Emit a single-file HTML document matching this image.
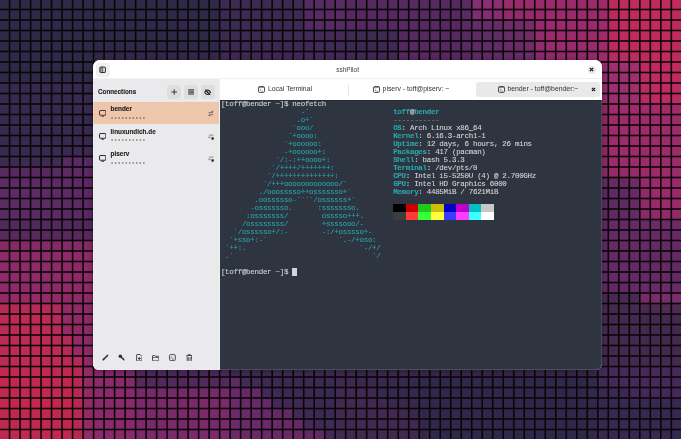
<!DOCTYPE html><html><head><meta charset="utf-8"><style>
*{margin:0;padding:0;box-sizing:border-box}
html,body{width:681px;height:439px;overflow:hidden;background:#0c0810}
.win{will-change:transform}
body{position:relative;font-family:"Liberation Sans",sans-serif}
.bg{position:absolute;left:0;top:0}
.win{position:absolute;left:93.2px;top:60px;width:509.2px;height:309.6px;border-radius:7px 7px 6px 6px;overflow:hidden;background:#fff;box-shadow:0 1px 6px rgba(0,0,0,.35)}
.win>*{position:absolute}
.hdr{left:0;top:0;width:100%;height:19px;background:#fff;border-bottom:1px solid #f1f1f1}
.edge{left:0;top:0;right:0;bottom:0;border-radius:7px 7px 6px 6px;border:1px solid rgba(255,255,255,.13);pointer-events:none}
.tbtn{left:3px;top:3.2px;width:13.8px;height:13.8px;border-radius:3.5px;background:#efefef}
.title{left:0;width:100%;top:4px;text-align:center;font-size:6.5px;line-height:12px;color:#3d3d3d}
.close{left:494.8px;top:5.6px;width:8.6px;height:8.6px;border-radius:50%;background:#e9e9e9}
.side{left:0;top:18.8px;width:127.4px;bottom:0;background:#eaeaec;border-right:1px solid #f1f1f3}
.conn{left:5px;top:28.2px;font-size:6.3px;font-weight:bold;color:#222;-webkit-text-stroke:0.12px #222;line-height:8px}
.sbtn{top:25.2px;width:13.4px;height:13.4px;border-radius:3.5px;background:#dedede}
.row{left:0;width:126.4px;height:22.2px}
.row.sel{background:#eec6ab}
.rt{left:17.6px;font-size:6.4px;font-weight:bold;color:#222;-webkit-text-stroke:0.12px #222;line-height:8px}
.rd{left:18px;font-size:5px;color:#666;letter-spacing:-0.2px;line-height:6px}
.tabs{left:127.3px;top:19px;right:0;height:20.2px;background:#fff}
.tab{top:22.3px;height:14.4px}
.tab.act{background:#e9e9e9;border-radius:3px}
.sep{top:23.8px;width:1px;height:11.8px;background:#e6e6e6}
.tabi{top:26.3px;width:7px;height:7px}
.tabi svg{display:block}
.tabt{top:25.3px;font-size:6.85px;color:#333;line-height:8px;white-space:nowrap}
.term{left:127.3px;top:39.5px;right:0;bottom:0;background:#2e3440;border-top:1px solid #272b34}
.term>*{position:absolute}
pre{-webkit-text-stroke:0.1px currentColor;left:0.6px;top:-0.3px;font-family:"Liberation Mono",monospace;font-size:7.5px;letter-spacing:-0.3px;line-height:8px;color:#c8cbc8;white-space:pre}
.cy{color:#25a4ac}
b.cy{color:#2aa6aa}
.fg{color:#d2d4d2}
.cur{background:#d4d4d4;left:71.4px;top:167.3px;width:5.1px;height:8.1px}
.dim{color:#8a8c90}
.cb{width:12.6px;height:8px}
.ic{position:absolute}
</style></head><body><svg class="bg" width="681" height="439" viewBox="0 0 681 439"><rect width="681" height="439" fill="#0a0608"/><rect x="-0.14" y="-0.20" width="8.90" height="8.90" fill="#2d2947"/><rect x="10.36" y="-0.20" width="8.90" height="8.90" fill="#2d2947"/><rect x="20.86" y="-0.20" width="8.90" height="8.90" fill="#2d2947"/><rect x="31.37" y="-0.20" width="8.90" height="8.90" fill="#2d2947"/><rect x="41.87" y="-0.20" width="8.90" height="8.90" fill="#2d2947"/><rect x="52.38" y="-0.20" width="8.90" height="8.90" fill="#2d2947"/><rect x="62.88" y="-0.20" width="8.90" height="8.90" fill="#2d2947"/><rect x="73.38" y="-0.20" width="8.90" height="8.90" fill="#2d2947"/><rect x="83.89" y="-0.20" width="8.90" height="8.90" fill="#2d2947"/><rect x="94.39" y="-0.20" width="8.90" height="8.90" fill="#2d2947"/><rect x="104.90" y="-0.20" width="8.90" height="8.90" fill="#2d2947"/><rect x="115.40" y="-0.20" width="8.90" height="8.90" fill="#2d2947"/><rect x="125.90" y="-0.20" width="8.90" height="8.90" fill="#2d2947"/><rect x="136.41" y="-0.20" width="8.90" height="8.90" fill="#2d2947"/><rect x="146.91" y="-0.20" width="8.90" height="8.90" fill="#2d2947"/><rect x="157.42" y="-0.20" width="8.90" height="8.90" fill="#2d2947"/><rect x="167.92" y="-0.20" width="8.90" height="8.90" fill="#2d2947"/><rect x="178.42" y="-0.20" width="8.90" height="8.90" fill="#2d2947"/><rect x="188.93" y="-0.20" width="8.90" height="8.90" fill="#2d2947"/><rect x="199.43" y="-0.20" width="8.90" height="8.90" fill="#2d2947"/><rect x="209.94" y="-0.20" width="8.90" height="8.90" fill="#2f2948"/><rect x="220.44" y="-0.20" width="8.90" height="8.90" fill="#392a51"/><rect x="230.94" y="-0.20" width="8.90" height="8.90" fill="#3b2a52"/><rect x="241.45" y="-0.20" width="8.90" height="8.90" fill="#3b2a52"/><rect x="251.95" y="-0.20" width="8.90" height="8.90" fill="#3b2a52"/><rect x="262.46" y="-0.20" width="8.90" height="8.90" fill="#3b2a52"/><rect x="272.96" y="-0.20" width="8.90" height="8.90" fill="#3b2a52"/><rect x="283.46" y="-0.20" width="8.90" height="8.90" fill="#3b2a52"/><rect x="293.97" y="-0.20" width="8.90" height="8.90" fill="#3e2a54"/><rect x="304.47" y="-0.20" width="8.90" height="8.90" fill="#552b62"/><rect x="314.98" y="-0.20" width="8.90" height="8.90" fill="#582b64"/><rect x="325.48" y="-0.20" width="8.90" height="8.90" fill="#582b64"/><rect x="335.98" y="-0.20" width="8.90" height="8.90" fill="#582b64"/><rect x="346.49" y="-0.20" width="8.90" height="8.90" fill="#562a60"/><rect x="356.99" y="-0.20" width="8.90" height="8.90" fill="#562a60"/><rect x="367.50" y="-0.20" width="8.90" height="8.90" fill="#562a60"/><rect x="378.00" y="-0.20" width="8.90" height="8.90" fill="#562a60"/><rect x="388.50" y="-0.20" width="8.90" height="8.90" fill="#562a60"/><rect x="399.01" y="-0.20" width="8.90" height="8.90" fill="#562a60"/><rect x="409.51" y="-0.20" width="8.90" height="8.90" fill="#562a60"/><rect x="420.02" y="-0.20" width="8.90" height="8.90" fill="#562a60"/><rect x="430.52" y="-0.20" width="8.90" height="8.90" fill="#562a60"/><rect x="441.02" y="-0.20" width="8.90" height="8.90" fill="#562a60"/><rect x="451.53" y="-0.20" width="8.90" height="8.90" fill="#562a60"/><rect x="462.03" y="-0.20" width="8.90" height="8.90" fill="#5c2a62"/><rect x="472.54" y="-0.20" width="8.90" height="8.90" fill="#842e73"/><rect x="483.04" y="-0.20" width="8.90" height="8.90" fill="#8a2e75"/><rect x="493.54" y="-0.20" width="8.90" height="8.90" fill="#8c2e74"/><rect x="504.05" y="-0.20" width="8.90" height="8.90" fill="#982a6d"/><rect x="514.55" y="-0.20" width="8.90" height="8.90" fill="#9a2a6c"/><rect x="525.06" y="-0.20" width="8.90" height="8.90" fill="#9a2a6c"/><rect x="535.56" y="-0.20" width="8.90" height="8.90" fill="#9a2a6c"/><rect x="546.06" y="-0.20" width="8.90" height="8.90" fill="#9a2a6c"/><rect x="556.57" y="-0.20" width="8.90" height="8.90" fill="#9a2a6c"/><rect x="567.07" y="-0.20" width="8.90" height="8.90" fill="#9a2a6c"/><rect x="577.58" y="-0.20" width="8.90" height="8.90" fill="#9a2a6c"/><rect x="588.08" y="-0.20" width="8.90" height="8.90" fill="#9a2a6c"/><rect x="598.58" y="-0.20" width="8.90" height="8.90" fill="#9e2a6a"/><rect x="609.09" y="-0.20" width="8.90" height="8.90" fill="#bc2a5e"/><rect x="619.59" y="-0.20" width="8.90" height="8.90" fill="#c02a5c"/><rect x="630.10" y="-0.20" width="8.90" height="8.90" fill="#c02a5c"/><rect x="640.60" y="-0.20" width="8.90" height="8.90" fill="#c02a5c"/><rect x="651.10" y="-0.20" width="8.90" height="8.90" fill="#c02a5c"/><rect x="661.61" y="-0.20" width="8.90" height="8.90" fill="#c02a5c"/><rect x="672.11" y="-0.20" width="8.90" height="8.90" fill="#c02a5c"/><rect x="-0.14" y="10.30" width="8.90" height="8.90" fill="#2d2947"/><rect x="10.36" y="10.30" width="8.90" height="8.90" fill="#2d2947"/><rect x="20.86" y="10.30" width="8.90" height="8.90" fill="#2d2947"/><rect x="31.37" y="10.30" width="8.90" height="8.90" fill="#2d2947"/><rect x="41.87" y="10.30" width="8.90" height="8.90" fill="#2d2947"/><rect x="52.38" y="10.30" width="8.90" height="8.90" fill="#2d2947"/><rect x="62.88" y="10.30" width="8.90" height="8.90" fill="#2d2947"/><rect x="73.38" y="10.30" width="8.90" height="8.90" fill="#2d2947"/><rect x="83.89" y="10.30" width="8.90" height="8.90" fill="#2d2947"/><rect x="94.39" y="10.30" width="8.90" height="8.90" fill="#2d2947"/><rect x="104.90" y="10.30" width="8.90" height="8.90" fill="#2d2947"/><rect x="115.40" y="10.30" width="8.90" height="8.90" fill="#2d2947"/><rect x="125.90" y="10.30" width="8.90" height="8.90" fill="#2d2947"/><rect x="136.41" y="10.30" width="8.90" height="8.90" fill="#2d2947"/><rect x="146.91" y="10.30" width="8.90" height="8.90" fill="#2d2947"/><rect x="157.42" y="10.30" width="8.90" height="8.90" fill="#2d2947"/><rect x="167.92" y="10.30" width="8.90" height="8.90" fill="#2d2947"/><rect x="178.42" y="10.30" width="8.90" height="8.90" fill="#2d2947"/><rect x="188.93" y="10.30" width="8.90" height="8.90" fill="#2d2947"/><rect x="199.43" y="10.30" width="8.90" height="8.90" fill="#2d2947"/><rect x="209.94" y="10.30" width="8.90" height="8.90" fill="#2f2949"/><rect x="220.44" y="10.30" width="8.90" height="8.90" fill="#392a50"/><rect x="230.94" y="10.30" width="8.90" height="8.90" fill="#3b2a52"/><rect x="241.45" y="10.30" width="8.90" height="8.90" fill="#3b2a52"/><rect x="251.95" y="10.30" width="8.90" height="8.90" fill="#3b2a52"/><rect x="262.46" y="10.30" width="8.90" height="8.90" fill="#3b2a52"/><rect x="272.96" y="10.30" width="8.90" height="8.90" fill="#3b2a52"/><rect x="283.46" y="10.30" width="8.90" height="8.90" fill="#3b2a52"/><rect x="293.97" y="10.30" width="8.90" height="8.90" fill="#3f2a55"/><rect x="304.47" y="10.30" width="8.90" height="8.90" fill="#542b61"/><rect x="314.98" y="10.30" width="8.90" height="8.90" fill="#582b64"/><rect x="325.48" y="10.30" width="8.90" height="8.90" fill="#582b64"/><rect x="335.98" y="10.30" width="8.90" height="8.90" fill="#582b63"/><rect x="346.49" y="10.30" width="8.90" height="8.90" fill="#562a61"/><rect x="356.99" y="10.30" width="8.90" height="8.90" fill="#562a60"/><rect x="367.50" y="10.30" width="8.90" height="8.90" fill="#562a60"/><rect x="378.00" y="10.30" width="8.90" height="8.90" fill="#562a60"/><rect x="388.50" y="10.30" width="8.90" height="8.90" fill="#562a60"/><rect x="399.01" y="10.30" width="8.90" height="8.90" fill="#562a60"/><rect x="409.51" y="10.30" width="8.90" height="8.90" fill="#562a60"/><rect x="420.02" y="10.30" width="8.90" height="8.90" fill="#562a60"/><rect x="430.52" y="10.30" width="8.90" height="8.90" fill="#562a60"/><rect x="441.02" y="10.30" width="8.90" height="8.90" fill="#562a60"/><rect x="451.53" y="10.30" width="8.90" height="8.90" fill="#562a60"/><rect x="462.03" y="10.30" width="8.90" height="8.90" fill="#5c2a62"/><rect x="472.54" y="10.30" width="8.90" height="8.90" fill="#7e2d70"/><rect x="483.04" y="10.30" width="8.90" height="8.90" fill="#832e73"/><rect x="493.54" y="10.30" width="8.90" height="8.90" fill="#862d72"/><rect x="504.05" y="10.30" width="8.90" height="8.90" fill="#912b6c"/><rect x="514.55" y="10.30" width="8.90" height="8.90" fill="#932a6b"/><rect x="525.06" y="10.30" width="8.90" height="8.90" fill="#952a6b"/><rect x="535.56" y="10.30" width="8.90" height="8.90" fill="#982a6c"/><rect x="546.06" y="10.30" width="8.90" height="8.90" fill="#9a2a6c"/><rect x="556.57" y="10.30" width="8.90" height="8.90" fill="#9a2a6c"/><rect x="567.07" y="10.30" width="8.90" height="8.90" fill="#9a2a6c"/><rect x="577.58" y="10.30" width="8.90" height="8.90" fill="#9a2a6c"/><rect x="588.08" y="10.30" width="8.90" height="8.90" fill="#9a2a6c"/><rect x="598.58" y="10.30" width="8.90" height="8.90" fill="#a02a6a"/><rect x="609.09" y="10.30" width="8.90" height="8.90" fill="#ba2a5e"/><rect x="619.59" y="10.30" width="8.90" height="8.90" fill="#c02a5c"/><rect x="630.10" y="10.30" width="8.90" height="8.90" fill="#c02a5c"/><rect x="640.60" y="10.30" width="8.90" height="8.90" fill="#c02a5c"/><rect x="651.10" y="10.30" width="8.90" height="8.90" fill="#c02a5c"/><rect x="661.61" y="10.30" width="8.90" height="8.90" fill="#c02a5c"/><rect x="672.11" y="10.30" width="8.90" height="8.90" fill="#c02a5c"/><rect x="-0.14" y="20.80" width="8.90" height="8.90" fill="#2d2947"/><rect x="10.36" y="20.80" width="8.90" height="8.90" fill="#2d2947"/><rect x="20.86" y="20.80" width="8.90" height="8.90" fill="#2d2947"/><rect x="31.37" y="20.80" width="8.90" height="8.90" fill="#2d2947"/><rect x="41.87" y="20.80" width="8.90" height="8.90" fill="#2d2947"/><rect x="52.38" y="20.80" width="8.90" height="8.90" fill="#2d2947"/><rect x="62.88" y="20.80" width="8.90" height="8.90" fill="#2d2947"/><rect x="73.38" y="20.80" width="8.90" height="8.90" fill="#2d2947"/><rect x="83.89" y="20.80" width="8.90" height="8.90" fill="#2d2947"/><rect x="94.39" y="20.80" width="8.90" height="8.90" fill="#2d2947"/><rect x="104.90" y="20.80" width="8.90" height="8.90" fill="#2d2947"/><rect x="115.40" y="20.80" width="8.90" height="8.90" fill="#2d2947"/><rect x="125.90" y="20.80" width="8.90" height="8.90" fill="#2d2947"/><rect x="136.41" y="20.80" width="8.90" height="8.90" fill="#2d2947"/><rect x="146.91" y="20.80" width="8.90" height="8.90" fill="#2d2947"/><rect x="157.42" y="20.80" width="8.90" height="8.90" fill="#2d2947"/><rect x="167.92" y="20.80" width="8.90" height="8.90" fill="#2d2947"/><rect x="178.42" y="20.80" width="8.90" height="8.90" fill="#2d2947"/><rect x="188.93" y="20.80" width="8.90" height="8.90" fill="#2d2947"/><rect x="199.43" y="20.80" width="8.90" height="8.90" fill="#2d2947"/><rect x="209.94" y="20.80" width="8.90" height="8.90" fill="#2f2949"/><rect x="220.44" y="20.80" width="8.90" height="8.90" fill="#392a50"/><rect x="230.94" y="20.80" width="8.90" height="8.90" fill="#3b2a52"/><rect x="241.45" y="20.80" width="8.90" height="8.90" fill="#3b2a52"/><rect x="251.95" y="20.80" width="8.90" height="8.90" fill="#3b2a52"/><rect x="262.46" y="20.80" width="8.90" height="8.90" fill="#3b2a52"/><rect x="272.96" y="20.80" width="8.90" height="8.90" fill="#3b2a52"/><rect x="283.46" y="20.80" width="8.90" height="8.90" fill="#3b2a52"/><rect x="293.97" y="20.80" width="8.90" height="8.90" fill="#3e2a54"/><rect x="304.47" y="20.80" width="8.90" height="8.90" fill="#512b60"/><rect x="314.98" y="20.80" width="8.90" height="8.90" fill="#542b62"/><rect x="325.48" y="20.80" width="8.90" height="8.90" fill="#542b62"/><rect x="335.98" y="20.80" width="8.90" height="8.90" fill="#542b61"/><rect x="346.49" y="20.80" width="8.90" height="8.90" fill="#522a5e"/><rect x="356.99" y="20.80" width="8.90" height="8.90" fill="#522a5e"/><rect x="367.50" y="20.80" width="8.90" height="8.90" fill="#522a5e"/><rect x="378.00" y="20.80" width="8.90" height="8.90" fill="#522a5e"/><rect x="388.50" y="20.80" width="8.90" height="8.90" fill="#532a5e"/><rect x="399.01" y="20.80" width="8.90" height="8.90" fill="#552a5f"/><rect x="409.51" y="20.80" width="8.90" height="8.90" fill="#562a60"/><rect x="420.02" y="20.80" width="8.90" height="8.90" fill="#562a60"/><rect x="430.52" y="20.80" width="8.90" height="8.90" fill="#562a60"/><rect x="441.02" y="20.80" width="8.90" height="8.90" fill="#562a60"/><rect x="451.53" y="20.80" width="8.90" height="8.90" fill="#562a60"/><rect x="462.03" y="20.80" width="8.90" height="8.90" fill="#592a62"/><rect x="472.54" y="20.80" width="8.90" height="8.90" fill="#612c67"/><rect x="483.04" y="20.80" width="8.90" height="8.90" fill="#652c68"/><rect x="493.54" y="20.80" width="8.90" height="8.90" fill="#672c68"/><rect x="504.05" y="20.80" width="8.90" height="8.90" fill="#6f2c67"/><rect x="514.55" y="20.80" width="8.90" height="8.90" fill="#712c67"/><rect x="525.06" y="20.80" width="8.90" height="8.90" fill="#762c68"/><rect x="535.56" y="20.80" width="8.90" height="8.90" fill="#952a6b"/><rect x="546.06" y="20.80" width="8.90" height="8.90" fill="#9a2a6c"/><rect x="556.57" y="20.80" width="8.90" height="8.90" fill="#9a2a6c"/><rect x="567.07" y="20.80" width="8.90" height="8.90" fill="#9a2a6c"/><rect x="577.58" y="20.80" width="8.90" height="8.90" fill="#9a2a6c"/><rect x="588.08" y="20.80" width="8.90" height="8.90" fill="#9a2a6c"/><rect x="598.58" y="20.80" width="8.90" height="8.90" fill="#a02a6a"/><rect x="609.09" y="20.80" width="8.90" height="8.90" fill="#ba2a5e"/><rect x="619.59" y="20.80" width="8.90" height="8.90" fill="#c02a5c"/><rect x="630.10" y="20.80" width="8.90" height="8.90" fill="#c02a5c"/><rect x="640.60" y="20.80" width="8.90" height="8.90" fill="#c02a5c"/><rect x="651.10" y="20.80" width="8.90" height="8.90" fill="#c02a5c"/><rect x="661.61" y="20.80" width="8.90" height="8.90" fill="#c02a5c"/><rect x="672.11" y="20.80" width="8.90" height="8.90" fill="#c02a5c"/><rect x="-0.14" y="31.30" width="8.90" height="8.90" fill="#2d2947"/><rect x="10.36" y="31.30" width="8.90" height="8.90" fill="#2d2947"/><rect x="20.86" y="31.30" width="8.90" height="8.90" fill="#2d2947"/><rect x="31.37" y="31.30" width="8.90" height="8.90" fill="#2d2947"/><rect x="41.87" y="31.30" width="8.90" height="8.90" fill="#2d2947"/><rect x="52.38" y="31.30" width="8.90" height="8.90" fill="#2d2947"/><rect x="62.88" y="31.30" width="8.90" height="8.90" fill="#2d2947"/><rect x="73.38" y="31.30" width="8.90" height="8.90" fill="#2d2947"/><rect x="83.89" y="31.30" width="8.90" height="8.90" fill="#2d2947"/><rect x="94.39" y="31.30" width="8.90" height="8.90" fill="#2d2947"/><rect x="104.90" y="31.30" width="8.90" height="8.90" fill="#2d2947"/><rect x="115.40" y="31.30" width="8.90" height="8.90" fill="#2d2947"/><rect x="125.90" y="31.30" width="8.90" height="8.90" fill="#2d2947"/><rect x="136.41" y="31.30" width="8.90" height="8.90" fill="#2d2947"/><rect x="146.91" y="31.30" width="8.90" height="8.90" fill="#2d2947"/><rect x="157.42" y="31.30" width="8.90" height="8.90" fill="#2d2947"/><rect x="167.92" y="31.30" width="8.90" height="8.90" fill="#2d2947"/><rect x="178.42" y="31.30" width="8.90" height="8.90" fill="#2d2947"/><rect x="188.93" y="31.30" width="8.90" height="8.90" fill="#2d2947"/><rect x="199.43" y="31.30" width="8.90" height="8.90" fill="#2d2947"/><rect x="209.94" y="31.30" width="8.90" height="8.90" fill="#2f2949"/><rect x="220.44" y="31.30" width="8.90" height="8.90" fill="#392a50"/><rect x="230.94" y="31.30" width="8.90" height="8.90" fill="#3b2a52"/><rect x="241.45" y="31.30" width="8.90" height="8.90" fill="#3b2a52"/><rect x="251.95" y="31.30" width="8.90" height="8.90" fill="#3b2a52"/><rect x="262.46" y="31.30" width="8.90" height="8.90" fill="#3b2a52"/><rect x="272.96" y="31.30" width="8.90" height="8.90" fill="#3b2a52"/><rect x="283.46" y="31.30" width="8.90" height="8.90" fill="#3b2a52"/><rect x="293.97" y="31.30" width="8.90" height="8.90" fill="#3d2a53"/><rect x="304.47" y="31.30" width="8.90" height="8.90" fill="#422a57"/><rect x="314.98" y="31.30" width="8.90" height="8.90" fill="#442a58"/><rect x="325.48" y="31.30" width="8.90" height="8.90" fill="#442a58"/><rect x="335.98" y="31.30" width="8.90" height="8.90" fill="#432a57"/><rect x="346.49" y="31.30" width="8.90" height="8.90" fill="#3f2a53"/><rect x="356.99" y="31.30" width="8.90" height="8.90" fill="#3e2a52"/><rect x="367.50" y="31.30" width="8.90" height="8.90" fill="#3e2a52"/><rect x="378.00" y="31.30" width="8.90" height="8.90" fill="#3e2a52"/><rect x="388.50" y="31.30" width="8.90" height="8.90" fill="#412a54"/><rect x="399.01" y="31.30" width="8.90" height="8.90" fill="#532a5e"/><rect x="409.51" y="31.30" width="8.90" height="8.90" fill="#562a60"/><rect x="420.02" y="31.30" width="8.90" height="8.90" fill="#562a60"/><rect x="430.52" y="31.30" width="8.90" height="8.90" fill="#562a60"/><rect x="441.02" y="31.30" width="8.90" height="8.90" fill="#562a60"/><rect x="451.53" y="31.30" width="8.90" height="8.90" fill="#562a60"/><rect x="462.03" y="31.30" width="8.90" height="8.90" fill="#572a61"/><rect x="472.54" y="31.30" width="8.90" height="8.90" fill="#5d2c65"/><rect x="483.04" y="31.30" width="8.90" height="8.90" fill="#5e2c66"/><rect x="493.54" y="31.30" width="8.90" height="8.90" fill="#602c66"/><rect x="504.05" y="31.30" width="8.90" height="8.90" fill="#682c66"/><rect x="514.55" y="31.30" width="8.90" height="8.90" fill="#6a2c66"/><rect x="525.06" y="31.30" width="8.90" height="8.90" fill="#712c67"/><rect x="535.56" y="31.30" width="8.90" height="8.90" fill="#932a6b"/><rect x="546.06" y="31.30" width="8.90" height="8.90" fill="#9a2a6c"/><rect x="556.57" y="31.30" width="8.90" height="8.90" fill="#9a2a6c"/><rect x="567.07" y="31.30" width="8.90" height="8.90" fill="#9a2a6c"/><rect x="577.58" y="31.30" width="8.90" height="8.90" fill="#9a2a6c"/><rect x="588.08" y="31.30" width="8.90" height="8.90" fill="#9a2a6c"/><rect x="598.58" y="31.30" width="8.90" height="8.90" fill="#a02a6a"/><rect x="609.09" y="31.30" width="8.90" height="8.90" fill="#ba2a5e"/><rect x="619.59" y="31.30" width="8.90" height="8.90" fill="#c02a5c"/><rect x="630.10" y="31.30" width="8.90" height="8.90" fill="#c02a5c"/><rect x="640.60" y="31.30" width="8.90" height="8.90" fill="#c02a5c"/><rect x="651.10" y="31.30" width="8.90" height="8.90" fill="#c02a5c"/><rect x="661.61" y="31.30" width="8.90" height="8.90" fill="#c02a5c"/><rect x="672.11" y="31.30" width="8.90" height="8.90" fill="#c02a5c"/><rect x="-0.14" y="41.80" width="8.90" height="8.90" fill="#2d2947"/><rect x="10.36" y="41.80" width="8.90" height="8.90" fill="#2d2947"/><rect x="20.86" y="41.80" width="8.90" height="8.90" fill="#2d2947"/><rect x="31.37" y="41.80" width="8.90" height="8.90" fill="#2d2947"/><rect x="41.87" y="41.80" width="8.90" height="8.90" fill="#2d2947"/><rect x="52.38" y="41.80" width="8.90" height="8.90" fill="#2d2947"/><rect x="62.88" y="41.80" width="8.90" height="8.90" fill="#2d2947"/><rect x="73.38" y="41.80" width="8.90" height="8.90" fill="#2d2947"/><rect x="83.89" y="41.80" width="8.90" height="8.90" fill="#2d2947"/><rect x="94.39" y="41.80" width="8.90" height="8.90" fill="#2d2947"/><rect x="104.90" y="41.80" width="8.90" height="8.90" fill="#2d2947"/><rect x="115.40" y="41.80" width="8.90" height="8.90" fill="#2d2947"/><rect x="125.90" y="41.80" width="8.90" height="8.90" fill="#2d2947"/><rect x="136.41" y="41.80" width="8.90" height="8.90" fill="#2d2947"/><rect x="146.91" y="41.80" width="8.90" height="8.90" fill="#2d2947"/><rect x="157.42" y="41.80" width="8.90" height="8.90" fill="#2d2947"/><rect x="167.92" y="41.80" width="8.90" height="8.90" fill="#2d2947"/><rect x="178.42" y="41.80" width="8.90" height="8.90" fill="#2d2947"/><rect x="188.93" y="41.80" width="8.90" height="8.90" fill="#2d2947"/><rect x="199.43" y="41.80" width="8.90" height="8.90" fill="#2d2947"/><rect x="209.94" y="41.80" width="8.90" height="8.90" fill="#2f2949"/><rect x="220.44" y="41.80" width="8.90" height="8.90" fill="#392a50"/><rect x="230.94" y="41.80" width="8.90" height="8.90" fill="#3b2a52"/><rect x="241.45" y="41.80" width="8.90" height="8.90" fill="#3b2a52"/><rect x="251.95" y="41.80" width="8.90" height="8.90" fill="#3b2a52"/><rect x="262.46" y="41.80" width="8.90" height="8.90" fill="#3b2a52"/><rect x="272.96" y="41.80" width="8.90" height="8.90" fill="#3b2a52"/><rect x="283.46" y="41.80" width="8.90" height="8.90" fill="#3b2a52"/><rect x="293.97" y="41.80" width="8.90" height="8.90" fill="#3c2a53"/><rect x="304.47" y="41.80" width="8.90" height="8.90" fill="#3f2a55"/><rect x="314.98" y="41.80" width="8.90" height="8.90" fill="#402a56"/><rect x="325.48" y="41.80" width="8.90" height="8.90" fill="#402a56"/><rect x="335.98" y="41.80" width="8.90" height="8.90" fill="#3f2a55"/><rect x="346.49" y="41.80" width="8.90" height="8.90" fill="#3b2a51"/><rect x="356.99" y="41.80" width="8.90" height="8.90" fill="#3a2a50"/><rect x="367.50" y="41.80" width="8.90" height="8.90" fill="#3a2a50"/><rect x="378.00" y="41.80" width="8.90" height="8.90" fill="#3a2a50"/><rect x="388.50" y="41.80" width="8.90" height="8.90" fill="#3e2a52"/><rect x="399.01" y="41.80" width="8.90" height="8.90" fill="#522a5e"/><rect x="409.51" y="41.80" width="8.90" height="8.90" fill="#562a60"/><rect x="420.02" y="41.80" width="8.90" height="8.90" fill="#562a60"/><rect x="430.52" y="41.80" width="8.90" height="8.90" fill="#562a60"/><rect x="441.02" y="41.80" width="8.90" height="8.90" fill="#562a60"/><rect x="451.53" y="41.80" width="8.90" height="8.90" fill="#562a60"/><rect x="462.03" y="41.80" width="8.90" height="8.90" fill="#572a61"/><rect x="472.54" y="41.80" width="8.90" height="8.90" fill="#5d2c65"/><rect x="483.04" y="41.80" width="8.90" height="8.90" fill="#5e2c66"/><rect x="493.54" y="41.80" width="8.90" height="8.90" fill="#602c66"/><rect x="504.05" y="41.80" width="8.90" height="8.90" fill="#682c66"/><rect x="514.55" y="41.80" width="8.90" height="8.90" fill="#6a2c66"/><rect x="525.06" y="41.80" width="8.90" height="8.90" fill="#712c67"/><rect x="535.56" y="41.80" width="8.90" height="8.90" fill="#932a6b"/><rect x="546.06" y="41.80" width="8.90" height="8.90" fill="#9a2a6c"/><rect x="556.57" y="41.80" width="8.90" height="8.90" fill="#9a2a6c"/><rect x="567.07" y="41.80" width="8.90" height="8.90" fill="#9a2a6c"/><rect x="577.58" y="41.80" width="8.90" height="8.90" fill="#9a2a6c"/><rect x="588.08" y="41.80" width="8.90" height="8.90" fill="#9a2a6c"/><rect x="598.58" y="41.80" width="8.90" height="8.90" fill="#a02a6a"/><rect x="609.09" y="41.80" width="8.90" height="8.90" fill="#ba2a5e"/><rect x="619.59" y="41.80" width="8.90" height="8.90" fill="#c02a5c"/><rect x="630.10" y="41.80" width="8.90" height="8.90" fill="#c02a5c"/><rect x="640.60" y="41.80" width="8.90" height="8.90" fill="#c02a5c"/><rect x="651.10" y="41.80" width="8.90" height="8.90" fill="#c02a5c"/><rect x="661.61" y="41.80" width="8.90" height="8.90" fill="#c02a5c"/><rect x="672.11" y="41.80" width="8.90" height="8.90" fill="#c02a5c"/><rect x="-0.14" y="52.30" width="8.90" height="8.90" fill="#2d2947"/><rect x="10.36" y="52.30" width="8.90" height="8.90" fill="#2d2947"/><rect x="20.86" y="52.30" width="8.90" height="8.90" fill="#2d2947"/><rect x="31.37" y="52.30" width="8.90" height="8.90" fill="#2d2947"/><rect x="41.87" y="52.30" width="8.90" height="8.90" fill="#2d2947"/><rect x="52.38" y="52.30" width="8.90" height="8.90" fill="#2d2947"/><rect x="62.88" y="52.30" width="8.90" height="8.90" fill="#2d2947"/><rect x="73.38" y="52.30" width="8.90" height="8.90" fill="#2d2947"/><rect x="83.89" y="52.30" width="8.90" height="8.90" fill="#2d2947"/><rect x="94.39" y="52.30" width="8.90" height="8.90" fill="#2f2948"/><rect x="104.90" y="52.30" width="8.90" height="8.90" fill="#32294a"/><rect x="115.40" y="52.30" width="8.90" height="8.90" fill="#34294b"/><rect x="125.90" y="52.30" width="8.90" height="8.90" fill="#34294b"/><rect x="136.41" y="52.30" width="8.90" height="8.90" fill="#34294b"/><rect x="146.91" y="52.30" width="8.90" height="8.90" fill="#34294b"/><rect x="157.42" y="52.30" width="8.90" height="8.90" fill="#34294b"/><rect x="167.92" y="52.30" width="8.90" height="8.90" fill="#34294b"/><rect x="178.42" y="52.30" width="8.90" height="8.90" fill="#34294b"/><rect x="188.93" y="52.30" width="8.90" height="8.90" fill="#34294b"/><rect x="199.43" y="52.30" width="8.90" height="8.90" fill="#34294b"/><rect x="209.94" y="52.30" width="8.90" height="8.90" fill="#35294c"/><rect x="220.44" y="52.30" width="8.90" height="8.90" fill="#3e2a53"/><rect x="230.94" y="52.30" width="8.90" height="8.90" fill="#402a54"/><rect x="241.45" y="52.30" width="8.90" height="8.90" fill="#402a54"/><rect x="251.95" y="52.30" width="8.90" height="8.90" fill="#402a54"/><rect x="262.46" y="52.30" width="8.90" height="8.90" fill="#402a54"/><rect x="272.96" y="52.30" width="8.90" height="8.90" fill="#402a54"/><rect x="283.46" y="52.30" width="8.90" height="8.90" fill="#402a54"/><rect x="293.97" y="52.30" width="8.90" height="8.90" fill="#402a55"/><rect x="304.47" y="52.30" width="8.90" height="8.90" fill="#432a57"/><rect x="314.98" y="52.30" width="8.90" height="8.90" fill="#442a58"/><rect x="325.48" y="52.30" width="8.90" height="8.90" fill="#442a58"/><rect x="335.98" y="52.30" width="8.90" height="8.90" fill="#432a57"/><rect x="346.49" y="52.30" width="8.90" height="8.90" fill="#3f2a53"/><rect x="356.99" y="52.30" width="8.90" height="8.90" fill="#3f2a53"/><rect x="367.50" y="52.30" width="8.90" height="8.90" fill="#3f2a53"/><rect x="378.00" y="52.30" width="8.90" height="8.90" fill="#3f2a53"/><rect x="388.50" y="52.30" width="8.90" height="8.90" fill="#422a54"/><rect x="399.01" y="52.30" width="8.90" height="8.90" fill="#542a5f"/><rect x="409.51" y="52.30" width="8.90" height="8.90" fill="#572a60"/><rect x="420.02" y="52.30" width="8.90" height="8.90" fill="#572a60"/><rect x="430.52" y="52.30" width="8.90" height="8.90" fill="#572a60"/><rect x="441.02" y="52.30" width="8.90" height="8.90" fill="#572a60"/><rect x="451.53" y="52.30" width="8.90" height="8.90" fill="#572a60"/><rect x="462.03" y="52.30" width="8.90" height="8.90" fill="#572a61"/><rect x="472.54" y="52.30" width="8.90" height="8.90" fill="#5d2c65"/><rect x="483.04" y="52.30" width="8.90" height="8.90" fill="#5d2c65"/><rect x="493.54" y="52.30" width="8.90" height="8.90" fill="#5f2c65"/><rect x="504.05" y="52.30" width="8.90" height="8.90" fill="#662c65"/><rect x="514.55" y="52.30" width="8.90" height="8.90" fill="#682c65"/><rect x="525.06" y="52.30" width="8.90" height="8.90" fill="#6c2c66"/><rect x="535.56" y="52.30" width="8.90" height="8.90" fill="#8c2a6a"/><rect x="546.06" y="52.30" width="8.90" height="8.90" fill="#902a6a"/><rect x="556.57" y="52.30" width="8.90" height="8.90" fill="#902a6a"/><rect x="567.07" y="52.30" width="8.90" height="8.90" fill="#902a6a"/><rect x="577.58" y="52.30" width="8.90" height="8.90" fill="#902a6a"/><rect x="588.08" y="52.30" width="8.90" height="8.90" fill="#942a6b"/><rect x="598.58" y="52.30" width="8.90" height="8.90" fill="#9b2b6a"/><rect x="609.09" y="52.30" width="8.90" height="8.90" fill="#b62b61"/><rect x="619.59" y="52.30" width="8.90" height="8.90" fill="#ba2b5f"/><rect x="630.10" y="52.30" width="8.90" height="8.90" fill="#bc2b5e"/><rect x="640.60" y="52.30" width="8.90" height="8.90" fill="#be2a5d"/><rect x="651.10" y="52.30" width="8.90" height="8.90" fill="#c02a5d"/><rect x="661.61" y="52.30" width="8.90" height="8.90" fill="#c02a5d"/><rect x="672.11" y="52.30" width="8.90" height="8.90" fill="#c02a5d"/><rect x="-0.14" y="62.80" width="8.90" height="8.90" fill="#2d2947"/><rect x="10.36" y="62.80" width="8.90" height="8.90" fill="#2d2947"/><rect x="20.86" y="62.80" width="8.90" height="8.90" fill="#2d2947"/><rect x="31.37" y="62.80" width="8.90" height="8.90" fill="#2d2947"/><rect x="41.87" y="62.80" width="8.90" height="8.90" fill="#2d2947"/><rect x="52.38" y="62.80" width="8.90" height="8.90" fill="#2d2947"/><rect x="62.88" y="62.80" width="8.90" height="8.90" fill="#2d2947"/><rect x="73.38" y="62.80" width="8.90" height="8.90" fill="#2d2947"/><rect x="83.89" y="62.80" width="8.90" height="8.90" fill="#2d2947"/><rect x="94.39" y="62.80" width="8.90" height="8.90" fill="#32294a"/><rect x="104.90" y="62.80" width="8.90" height="8.90" fill="#4f2a5b"/><rect x="115.40" y="62.80" width="8.90" height="8.90" fill="#532a5e"/><rect x="125.90" y="62.80" width="8.90" height="8.90" fill="#532a5e"/><rect x="136.41" y="62.80" width="8.90" height="8.90" fill="#532a5e"/><rect x="146.91" y="62.80" width="8.90" height="8.90" fill="#532a5e"/><rect x="157.42" y="62.80" width="8.90" height="8.90" fill="#532a5e"/><rect x="167.92" y="62.80" width="8.90" height="8.90" fill="#532a5e"/><rect x="178.42" y="62.80" width="8.90" height="8.90" fill="#532a5e"/><rect x="188.93" y="62.80" width="8.90" height="8.90" fill="#532a5e"/><rect x="199.43" y="62.80" width="8.90" height="8.90" fill="#532a5e"/><rect x="209.94" y="62.80" width="8.90" height="8.90" fill="#542a5e"/><rect x="220.44" y="62.80" width="8.90" height="8.90" fill="#552a5f"/><rect x="230.94" y="62.80" width="8.90" height="8.90" fill="#552a60"/><rect x="241.45" y="62.80" width="8.90" height="8.90" fill="#552a60"/><rect x="251.95" y="62.80" width="8.90" height="8.90" fill="#552a60"/><rect x="262.46" y="62.80" width="8.90" height="8.90" fill="#552a60"/><rect x="272.96" y="62.80" width="8.90" height="8.90" fill="#552a60"/><rect x="283.46" y="62.80" width="8.90" height="8.90" fill="#552a60"/><rect x="293.97" y="62.80" width="8.90" height="8.90" fill="#562a60"/><rect x="304.47" y="62.80" width="8.90" height="8.90" fill="#562a60"/><rect x="314.98" y="62.80" width="8.90" height="8.90" fill="#562a60"/><rect x="325.48" y="62.80" width="8.90" height="8.90" fill="#562a60"/><rect x="335.98" y="62.80" width="8.90" height="8.90" fill="#562a60"/><rect x="346.49" y="62.80" width="8.90" height="8.90" fill="#562a60"/><rect x="356.99" y="62.80" width="8.90" height="8.90" fill="#552a5f"/><rect x="367.50" y="62.80" width="8.90" height="8.90" fill="#552a5f"/><rect x="378.00" y="62.80" width="8.90" height="8.90" fill="#552a5f"/><rect x="388.50" y="62.80" width="8.90" height="8.90" fill="#572a60"/><rect x="399.01" y="62.80" width="8.90" height="8.90" fill="#582a61"/><rect x="409.51" y="62.80" width="8.90" height="8.90" fill="#592a62"/><rect x="420.02" y="62.80" width="8.90" height="8.90" fill="#592a62"/><rect x="430.52" y="62.80" width="8.90" height="8.90" fill="#592a62"/><rect x="441.02" y="62.80" width="8.90" height="8.90" fill="#592a62"/><rect x="451.53" y="62.80" width="8.90" height="8.90" fill="#592a62"/><rect x="462.03" y="62.80" width="8.90" height="8.90" fill="#5a2a62"/><rect x="472.54" y="62.80" width="8.90" height="8.90" fill="#5a2a62"/><rect x="483.04" y="62.80" width="8.90" height="8.90" fill="#5b2a63"/><rect x="493.54" y="62.80" width="8.90" height="8.90" fill="#5b2a63"/><rect x="504.05" y="62.80" width="8.90" height="8.90" fill="#5c2a63"/><rect x="514.55" y="62.80" width="8.90" height="8.90" fill="#5c2a63"/><rect x="525.06" y="62.80" width="8.90" height="8.90" fill="#5f2a63"/><rect x="535.56" y="62.80" width="8.90" height="8.90" fill="#612a63"/><rect x="546.06" y="62.80" width="8.90" height="8.90" fill="#642a64"/><rect x="556.57" y="62.80" width="8.90" height="8.90" fill="#642a64"/><rect x="567.07" y="62.80" width="8.90" height="8.90" fill="#642a64"/><rect x="577.58" y="62.80" width="8.90" height="8.90" fill="#642a64"/><rect x="588.08" y="62.80" width="8.90" height="8.90" fill="#6a2b65"/><rect x="598.58" y="62.80" width="8.90" height="8.90" fill="#962e6d"/><rect x="609.09" y="62.80" width="8.90" height="8.90" fill="#9e2f6e"/><rect x="619.59" y="62.80" width="8.90" height="8.90" fill="#a02f6d"/><rect x="630.10" y="62.80" width="8.90" height="8.90" fill="#a42e6b"/><rect x="640.60" y="62.80" width="8.90" height="8.90" fill="#bc2b61"/><rect x="651.10" y="62.80" width="8.90" height="8.90" fill="#c02a5f"/><rect x="661.61" y="62.80" width="8.90" height="8.90" fill="#c02a5f"/><rect x="672.11" y="62.80" width="8.90" height="8.90" fill="#c02a5f"/><rect x="-0.14" y="73.30" width="8.90" height="8.90" fill="#2e2948"/><rect x="10.36" y="73.30" width="8.90" height="8.90" fill="#2e2948"/><rect x="20.86" y="73.30" width="8.90" height="8.90" fill="#2e2948"/><rect x="31.37" y="73.30" width="8.90" height="8.90" fill="#2e2948"/><rect x="41.87" y="73.30" width="8.90" height="8.90" fill="#2e2948"/><rect x="52.38" y="73.30" width="8.90" height="8.90" fill="#2e2948"/><rect x="62.88" y="73.30" width="8.90" height="8.90" fill="#2e2948"/><rect x="73.38" y="73.30" width="8.90" height="8.90" fill="#2e2948"/><rect x="83.89" y="73.30" width="8.90" height="8.90" fill="#2e2948"/><rect x="94.39" y="73.30" width="8.90" height="8.90" fill="#35294c"/><rect x="588.08" y="73.30" width="8.90" height="8.90" fill="#642b64"/><rect x="598.58" y="73.30" width="8.90" height="8.90" fill="#902f6e"/><rect x="609.09" y="73.30" width="8.90" height="8.90" fill="#9a3070"/><rect x="619.59" y="73.30" width="8.90" height="8.90" fill="#9a3070"/><rect x="630.10" y="73.30" width="8.90" height="8.90" fill="#a02f6e"/><rect x="640.60" y="73.30" width="8.90" height="8.90" fill="#ba2b62"/><rect x="651.10" y="73.30" width="8.90" height="8.90" fill="#c02a60"/><rect x="661.61" y="73.30" width="8.90" height="8.90" fill="#c02a60"/><rect x="672.11" y="73.30" width="8.90" height="8.90" fill="#c02a60"/><rect x="-0.14" y="83.80" width="8.90" height="8.90" fill="#362a4d"/><rect x="10.36" y="83.80" width="8.90" height="8.90" fill="#362a4d"/><rect x="20.86" y="83.80" width="8.90" height="8.90" fill="#362a4d"/><rect x="31.37" y="83.80" width="8.90" height="8.90" fill="#362a4d"/><rect x="41.87" y="83.80" width="8.90" height="8.90" fill="#362a4d"/><rect x="52.38" y="83.80" width="8.90" height="8.90" fill="#362a4d"/><rect x="62.88" y="83.80" width="8.90" height="8.90" fill="#362a4d"/><rect x="73.38" y="83.80" width="8.90" height="8.90" fill="#362a4d"/><rect x="83.89" y="83.80" width="8.90" height="8.90" fill="#362a4d"/><rect x="94.39" y="83.80" width="8.90" height="8.90" fill="#3b2a50"/><rect x="588.08" y="83.80" width="8.90" height="8.90" fill="#642b64"/><rect x="598.58" y="83.80" width="8.90" height="8.90" fill="#902f6e"/><rect x="609.09" y="83.80" width="8.90" height="8.90" fill="#9a3070"/><rect x="619.59" y="83.80" width="8.90" height="8.90" fill="#9a3070"/><rect x="630.10" y="83.80" width="8.90" height="8.90" fill="#a02f6e"/><rect x="640.60" y="83.80" width="8.90" height="8.90" fill="#ba2b62"/><rect x="651.10" y="83.80" width="8.90" height="8.90" fill="#c02a60"/><rect x="661.61" y="83.80" width="8.90" height="8.90" fill="#c02a60"/><rect x="672.11" y="83.80" width="8.90" height="8.90" fill="#c02a60"/><rect x="-0.14" y="94.30" width="8.90" height="8.90" fill="#372a4e"/><rect x="10.36" y="94.30" width="8.90" height="8.90" fill="#372a4e"/><rect x="20.86" y="94.30" width="8.90" height="8.90" fill="#372a4e"/><rect x="31.37" y="94.30" width="8.90" height="8.90" fill="#372a4e"/><rect x="41.87" y="94.30" width="8.90" height="8.90" fill="#372a4e"/><rect x="52.38" y="94.30" width="8.90" height="8.90" fill="#372a4e"/><rect x="62.88" y="94.30" width="8.90" height="8.90" fill="#372a4e"/><rect x="73.38" y="94.30" width="8.90" height="8.90" fill="#372a4e"/><rect x="83.89" y="94.30" width="8.90" height="8.90" fill="#372a4e"/><rect x="94.39" y="94.30" width="8.90" height="8.90" fill="#3c2a51"/><rect x="588.08" y="94.30" width="8.90" height="8.90" fill="#642b64"/><rect x="598.58" y="94.30" width="8.90" height="8.90" fill="#912f6d"/><rect x="609.09" y="94.30" width="8.90" height="8.90" fill="#9a2f6f"/><rect x="619.59" y="94.30" width="8.90" height="8.90" fill="#9a2f6f"/><rect x="630.10" y="94.30" width="8.90" height="8.90" fill="#9e2f6e"/><rect x="640.60" y="94.30" width="8.90" height="8.90" fill="#b72b63"/><rect x="651.10" y="94.30" width="8.90" height="8.90" fill="#bb2a62"/><rect x="661.61" y="94.30" width="8.90" height="8.90" fill="#bb2a62"/><rect x="672.11" y="94.30" width="8.90" height="8.90" fill="#bb2a62"/><rect x="-0.14" y="104.80" width="8.90" height="8.90" fill="#372a4e"/><rect x="10.36" y="104.80" width="8.90" height="8.90" fill="#372a4e"/><rect x="20.86" y="104.80" width="8.90" height="8.90" fill="#372a4e"/><rect x="31.37" y="104.80" width="8.90" height="8.90" fill="#372a4e"/><rect x="41.87" y="104.80" width="8.90" height="8.90" fill="#372a4e"/><rect x="52.38" y="104.80" width="8.90" height="8.90" fill="#372a4e"/><rect x="62.88" y="104.80" width="8.90" height="8.90" fill="#372a4e"/><rect x="73.38" y="104.80" width="8.90" height="8.90" fill="#372a4e"/><rect x="83.89" y="104.80" width="8.90" height="8.90" fill="#372a4e"/><rect x="94.39" y="104.80" width="8.90" height="8.90" fill="#3c2a51"/><rect x="588.08" y="104.80" width="8.90" height="8.90" fill="#642a64"/><rect x="598.58" y="104.80" width="8.90" height="8.90" fill="#922b69"/><rect x="609.09" y="104.80" width="8.90" height="8.90" fill="#9c2c6b"/><rect x="619.59" y="104.80" width="8.90" height="8.90" fill="#9c2c6b"/><rect x="630.10" y="104.80" width="8.90" height="8.90" fill="#9e2b6a"/><rect x="640.60" y="104.80" width="8.90" height="8.90" fill="#a02b69"/><rect x="651.10" y="104.80" width="8.90" height="8.90" fill="#a12b68"/><rect x="661.61" y="104.80" width="8.90" height="8.90" fill="#a12b68"/><rect x="672.11" y="104.80" width="8.90" height="8.90" fill="#a12b68"/><rect x="-0.14" y="115.30" width="8.90" height="8.90" fill="#372a4e"/><rect x="10.36" y="115.30" width="8.90" height="8.90" fill="#372a4e"/><rect x="20.86" y="115.30" width="8.90" height="8.90" fill="#372a4e"/><rect x="31.37" y="115.30" width="8.90" height="8.90" fill="#372a4e"/><rect x="41.87" y="115.30" width="8.90" height="8.90" fill="#372a4e"/><rect x="52.38" y="115.30" width="8.90" height="8.90" fill="#372a4e"/><rect x="62.88" y="115.30" width="8.90" height="8.90" fill="#372a4e"/><rect x="73.38" y="115.30" width="8.90" height="8.90" fill="#372a4e"/><rect x="83.89" y="115.30" width="8.90" height="8.90" fill="#372a4e"/><rect x="94.39" y="115.30" width="8.90" height="8.90" fill="#3c2a51"/><rect x="588.08" y="115.30" width="8.90" height="8.90" fill="#642a63"/><rect x="598.58" y="115.30" width="8.90" height="8.90" fill="#922b69"/><rect x="609.09" y="115.30" width="8.90" height="8.90" fill="#9c2b6a"/><rect x="619.59" y="115.30" width="8.90" height="8.90" fill="#9c2b6a"/><rect x="630.10" y="115.30" width="8.90" height="8.90" fill="#9c2b6a"/><rect x="640.60" y="115.30" width="8.90" height="8.90" fill="#9c2b6a"/><rect x="651.10" y="115.30" width="8.90" height="8.90" fill="#9c2b6a"/><rect x="661.61" y="115.30" width="8.90" height="8.90" fill="#9c2b6a"/><rect x="672.11" y="115.30" width="8.90" height="8.90" fill="#9c2b6a"/><rect x="-0.14" y="125.80" width="8.90" height="8.90" fill="#372a4e"/><rect x="10.36" y="125.80" width="8.90" height="8.90" fill="#372a4e"/><rect x="20.86" y="125.80" width="8.90" height="8.90" fill="#372a4e"/><rect x="31.37" y="125.80" width="8.90" height="8.90" fill="#372a4e"/><rect x="41.87" y="125.80" width="8.90" height="8.90" fill="#372a4e"/><rect x="52.38" y="125.80" width="8.90" height="8.90" fill="#372a4e"/><rect x="62.88" y="125.80" width="8.90" height="8.90" fill="#372a4e"/><rect x="73.38" y="125.80" width="8.90" height="8.90" fill="#372a4e"/><rect x="83.89" y="125.80" width="8.90" height="8.90" fill="#372a4e"/><rect x="94.39" y="125.80" width="8.90" height="8.90" fill="#3c2a51"/><rect x="588.08" y="125.80" width="8.90" height="8.90" fill="#642a63"/><rect x="598.58" y="125.80" width="8.90" height="8.90" fill="#922b69"/><rect x="609.09" y="125.80" width="8.90" height="8.90" fill="#9c2b6a"/><rect x="619.59" y="125.80" width="8.90" height="8.90" fill="#9c2b6a"/><rect x="630.10" y="125.80" width="8.90" height="8.90" fill="#9c2b6a"/><rect x="640.60" y="125.80" width="8.90" height="8.90" fill="#9c2b6a"/><rect x="651.10" y="125.80" width="8.90" height="8.90" fill="#9c2b6a"/><rect x="661.61" y="125.80" width="8.90" height="8.90" fill="#9c2b6a"/><rect x="672.11" y="125.80" width="8.90" height="8.90" fill="#9c2b6a"/><rect x="-0.14" y="136.30" width="8.90" height="8.90" fill="#372a4e"/><rect x="10.36" y="136.30" width="8.90" height="8.90" fill="#372a4e"/><rect x="20.86" y="136.30" width="8.90" height="8.90" fill="#372a4e"/><rect x="31.37" y="136.30" width="8.90" height="8.90" fill="#372a4e"/><rect x="41.87" y="136.30" width="8.90" height="8.90" fill="#372a4e"/><rect x="52.38" y="136.30" width="8.90" height="8.90" fill="#372a4e"/><rect x="62.88" y="136.30" width="8.90" height="8.90" fill="#372a4e"/><rect x="73.38" y="136.30" width="8.90" height="8.90" fill="#372a4e"/><rect x="83.89" y="136.30" width="8.90" height="8.90" fill="#372a4e"/><rect x="94.39" y="136.30" width="8.90" height="8.90" fill="#3c2a51"/><rect x="588.08" y="136.30" width="8.90" height="8.90" fill="#642a63"/><rect x="598.58" y="136.30" width="8.90" height="8.90" fill="#922b69"/><rect x="609.09" y="136.30" width="8.90" height="8.90" fill="#9c2b6a"/><rect x="619.59" y="136.30" width="8.90" height="8.90" fill="#9c2b6a"/><rect x="630.10" y="136.30" width="8.90" height="8.90" fill="#9c2b6a"/><rect x="640.60" y="136.30" width="8.90" height="8.90" fill="#9c2b6a"/><rect x="651.10" y="136.30" width="8.90" height="8.90" fill="#9c2b6a"/><rect x="661.61" y="136.30" width="8.90" height="8.90" fill="#9c2b6a"/><rect x="672.11" y="136.30" width="8.90" height="8.90" fill="#9c2b6a"/><rect x="-0.14" y="146.80" width="8.90" height="8.90" fill="#372a4e"/><rect x="10.36" y="146.80" width="8.90" height="8.90" fill="#372a4e"/><rect x="20.86" y="146.80" width="8.90" height="8.90" fill="#372a4e"/><rect x="31.37" y="146.80" width="8.90" height="8.90" fill="#372a4e"/><rect x="41.87" y="146.80" width="8.90" height="8.90" fill="#372a4e"/><rect x="52.38" y="146.80" width="8.90" height="8.90" fill="#392a4f"/><rect x="62.88" y="146.80" width="8.90" height="8.90" fill="#3b2a50"/><rect x="73.38" y="146.80" width="8.90" height="8.90" fill="#3d2a52"/><rect x="83.89" y="146.80" width="8.90" height="8.90" fill="#3d2a52"/><rect x="94.39" y="146.80" width="8.90" height="8.90" fill="#402a53"/><rect x="588.08" y="146.80" width="8.90" height="8.90" fill="#642a63"/><rect x="598.58" y="146.80" width="8.90" height="8.90" fill="#922b69"/><rect x="609.09" y="146.80" width="8.90" height="8.90" fill="#9c2b6a"/><rect x="619.59" y="146.80" width="8.90" height="8.90" fill="#9c2b6a"/><rect x="630.10" y="146.80" width="8.90" height="8.90" fill="#9c2b6a"/><rect x="640.60" y="146.80" width="8.90" height="8.90" fill="#9c2b6a"/><rect x="651.10" y="146.80" width="8.90" height="8.90" fill="#9c2b6a"/><rect x="661.61" y="146.80" width="8.90" height="8.90" fill="#9c2b6a"/><rect x="672.11" y="146.80" width="8.90" height="8.90" fill="#9c2b6a"/><rect x="-0.14" y="157.30" width="8.90" height="8.90" fill="#3b2a51"/><rect x="10.36" y="157.30" width="8.90" height="8.90" fill="#3d2a51"/><rect x="20.86" y="157.30" width="8.90" height="8.90" fill="#3d2a51"/><rect x="31.37" y="157.30" width="8.90" height="8.90" fill="#3d2a51"/><rect x="41.87" y="157.30" width="8.90" height="8.90" fill="#3d2a51"/><rect x="52.38" y="157.30" width="8.90" height="8.90" fill="#3e2a52"/><rect x="62.88" y="157.30" width="8.90" height="8.90" fill="#562b61"/><rect x="73.38" y="157.30" width="8.90" height="8.90" fill="#582b62"/><rect x="83.89" y="157.30" width="8.90" height="8.90" fill="#582b62"/><rect x="94.39" y="157.30" width="8.90" height="8.90" fill="#592b63"/><rect x="588.08" y="157.30" width="8.90" height="8.90" fill="#642a63"/><rect x="598.58" y="157.30" width="8.90" height="8.90" fill="#922b69"/><rect x="609.09" y="157.30" width="8.90" height="8.90" fill="#9c2b6a"/><rect x="619.59" y="157.30" width="8.90" height="8.90" fill="#9c2b6a"/><rect x="630.10" y="157.30" width="8.90" height="8.90" fill="#9c2b6a"/><rect x="640.60" y="157.30" width="8.90" height="8.90" fill="#9c2b6a"/><rect x="651.10" y="157.30" width="8.90" height="8.90" fill="#9c2b6a"/><rect x="661.61" y="157.30" width="8.90" height="8.90" fill="#9c2b6a"/><rect x="672.11" y="157.30" width="8.90" height="8.90" fill="#9c2b6a"/><rect x="-0.14" y="167.80" width="8.90" height="8.90" fill="#582a61"/><rect x="10.36" y="167.80" width="8.90" height="8.90" fill="#562a61"/><rect x="20.86" y="167.80" width="8.90" height="8.90" fill="#562a61"/><rect x="31.37" y="167.80" width="8.90" height="8.90" fill="#562a61"/><rect x="41.87" y="167.80" width="8.90" height="8.90" fill="#562a61"/><rect x="52.38" y="167.80" width="8.90" height="8.90" fill="#582a62"/><rect x="62.88" y="167.80" width="8.90" height="8.90" fill="#5a2a63"/><rect x="73.38" y="167.80" width="8.90" height="8.90" fill="#5c2a64"/><rect x="83.89" y="167.80" width="8.90" height="8.90" fill="#5c2a64"/><rect x="94.39" y="167.80" width="8.90" height="8.90" fill="#5c2a64"/><rect x="588.08" y="167.80" width="8.90" height="8.90" fill="#612a63"/><rect x="598.58" y="167.80" width="8.90" height="8.90" fill="#8c2b68"/><rect x="609.09" y="167.80" width="8.90" height="8.90" fill="#932b69"/><rect x="619.59" y="167.80" width="8.90" height="8.90" fill="#932b69"/><rect x="630.10" y="167.80" width="8.90" height="8.90" fill="#962b69"/><rect x="640.60" y="167.80" width="8.90" height="8.90" fill="#992b6a"/><rect x="651.10" y="167.80" width="8.90" height="8.90" fill="#9c2b6a"/><rect x="661.61" y="167.80" width="8.90" height="8.90" fill="#9c2b6a"/><rect x="672.11" y="167.80" width="8.90" height="8.90" fill="#9c2b6a"/><rect x="-0.14" y="178.30" width="8.90" height="8.90" fill="#5c2a64"/><rect x="10.36" y="178.30" width="8.90" height="8.90" fill="#5c2a64"/><rect x="20.86" y="178.30" width="8.90" height="8.90" fill="#5c2a64"/><rect x="31.37" y="178.30" width="8.90" height="8.90" fill="#5c2a64"/><rect x="41.87" y="178.30" width="8.90" height="8.90" fill="#5c2a64"/><rect x="52.38" y="178.30" width="8.90" height="8.90" fill="#5c2a64"/><rect x="62.88" y="178.30" width="8.90" height="8.90" fill="#5c2a64"/><rect x="73.38" y="178.30" width="8.90" height="8.90" fill="#5c2a64"/><rect x="83.89" y="178.30" width="8.90" height="8.90" fill="#5c2a64"/><rect x="94.39" y="178.30" width="8.90" height="8.90" fill="#5c2a64"/><rect x="588.08" y="178.30" width="8.90" height="8.90" fill="#5e2a62"/><rect x="598.58" y="178.30" width="8.90" height="8.90" fill="#642a63"/><rect x="609.09" y="178.30" width="8.90" height="8.90" fill="#672a63"/><rect x="619.59" y="178.30" width="8.90" height="8.90" fill="#672a63"/><rect x="630.10" y="178.30" width="8.90" height="8.90" fill="#6d2a64"/><rect x="640.60" y="178.30" width="8.90" height="8.90" fill="#942a69"/><rect x="651.10" y="178.30" width="8.90" height="8.90" fill="#9a2a6a"/><rect x="661.61" y="178.30" width="8.90" height="8.90" fill="#9a2a6a"/><rect x="672.11" y="178.30" width="8.90" height="8.90" fill="#9a2a6a"/><rect x="-0.14" y="188.80" width="8.90" height="8.90" fill="#5c2a64"/><rect x="10.36" y="188.80" width="8.90" height="8.90" fill="#5c2a64"/><rect x="20.86" y="188.80" width="8.90" height="8.90" fill="#5c2a64"/><rect x="31.37" y="188.80" width="8.90" height="8.90" fill="#5c2a64"/><rect x="41.87" y="188.80" width="8.90" height="8.90" fill="#5c2a64"/><rect x="52.38" y="188.80" width="8.90" height="8.90" fill="#5c2a64"/><rect x="62.88" y="188.80" width="8.90" height="8.90" fill="#5c2a64"/><rect x="73.38" y="188.80" width="8.90" height="8.90" fill="#5c2a64"/><rect x="83.89" y="188.80" width="8.90" height="8.90" fill="#5c2a64"/><rect x="94.39" y="188.80" width="8.90" height="8.90" fill="#5c2a64"/><rect x="588.08" y="188.80" width="8.90" height="8.90" fill="#5b2a62"/><rect x="598.58" y="188.80" width="8.90" height="8.90" fill="#5d2a62"/><rect x="609.09" y="188.80" width="8.90" height="8.90" fill="#5e2a62"/><rect x="619.59" y="188.80" width="8.90" height="8.90" fill="#5e2a62"/><rect x="630.10" y="188.80" width="8.90" height="8.90" fill="#672a63"/><rect x="640.60" y="188.80" width="8.90" height="8.90" fill="#912a69"/><rect x="651.10" y="188.80" width="8.90" height="8.90" fill="#9a2a6a"/><rect x="661.61" y="188.80" width="8.90" height="8.90" fill="#9a2a6a"/><rect x="672.11" y="188.80" width="8.90" height="8.90" fill="#9a2a6a"/><rect x="-0.14" y="199.30" width="8.90" height="8.90" fill="#5c2a64"/><rect x="10.36" y="199.30" width="8.90" height="8.90" fill="#5c2a64"/><rect x="20.86" y="199.30" width="8.90" height="8.90" fill="#5c2a64"/><rect x="31.37" y="199.30" width="8.90" height="8.90" fill="#5c2a64"/><rect x="41.87" y="199.30" width="8.90" height="8.90" fill="#5c2a64"/><rect x="52.38" y="199.30" width="8.90" height="8.90" fill="#5c2a64"/><rect x="62.88" y="199.30" width="8.90" height="8.90" fill="#5c2a64"/><rect x="73.38" y="199.30" width="8.90" height="8.90" fill="#5c2a64"/><rect x="83.89" y="199.30" width="8.90" height="8.90" fill="#5c2a64"/><rect x="94.39" y="199.30" width="8.90" height="8.90" fill="#5c2a64"/><rect x="588.08" y="199.30" width="8.90" height="8.90" fill="#5b2a62"/><rect x="598.58" y="199.30" width="8.90" height="8.90" fill="#5d2a62"/><rect x="609.09" y="199.30" width="8.90" height="8.90" fill="#5e2a62"/><rect x="619.59" y="199.30" width="8.90" height="8.90" fill="#5e2a62"/><rect x="630.10" y="199.30" width="8.90" height="8.90" fill="#672a63"/><rect x="640.60" y="199.30" width="8.90" height="8.90" fill="#912a69"/><rect x="651.10" y="199.30" width="8.90" height="8.90" fill="#9a2a6a"/><rect x="661.61" y="199.30" width="8.90" height="8.90" fill="#9a2a6a"/><rect x="672.11" y="199.30" width="8.90" height="8.90" fill="#9a2a6a"/><rect x="-0.14" y="209.80" width="8.90" height="8.90" fill="#5a2a63"/><rect x="10.36" y="209.80" width="8.90" height="8.90" fill="#5a2a62"/><rect x="20.86" y="209.80" width="8.90" height="8.90" fill="#5a2a62"/><rect x="31.37" y="209.80" width="8.90" height="8.90" fill="#5a2a62"/><rect x="41.87" y="209.80" width="8.90" height="8.90" fill="#5a2a62"/><rect x="52.38" y="209.80" width="8.90" height="8.90" fill="#5a2a62"/><rect x="62.88" y="209.80" width="8.90" height="8.90" fill="#5a2a62"/><rect x="73.38" y="209.80" width="8.90" height="8.90" fill="#5a2a62"/><rect x="83.89" y="209.80" width="8.90" height="8.90" fill="#5a2a62"/><rect x="94.39" y="209.80" width="8.90" height="8.90" fill="#5a2a63"/><rect x="588.08" y="209.80" width="8.90" height="8.90" fill="#5b2a62"/><rect x="598.58" y="209.80" width="8.90" height="8.90" fill="#5e2a62"/><rect x="609.09" y="209.80" width="8.90" height="8.90" fill="#5f2a63"/><rect x="619.59" y="209.80" width="8.90" height="8.90" fill="#5f2a63"/><rect x="630.10" y="209.80" width="8.90" height="8.90" fill="#652a63"/><rect x="640.60" y="209.80" width="8.90" height="8.90" fill="#8c2a69"/><rect x="651.10" y="209.80" width="8.90" height="8.90" fill="#922a69"/><rect x="661.61" y="209.80" width="8.90" height="8.90" fill="#922a69"/><rect x="672.11" y="209.80" width="8.90" height="8.90" fill="#922a69"/><rect x="-0.14" y="220.30" width="8.90" height="8.90" fill="#502a5b"/><rect x="10.36" y="220.30" width="8.90" height="8.90" fill="#502a5c"/><rect x="20.86" y="220.30" width="8.90" height="8.90" fill="#502a5c"/><rect x="31.37" y="220.30" width="8.90" height="8.90" fill="#502a5c"/><rect x="41.87" y="220.30" width="8.90" height="8.90" fill="#502a5c"/><rect x="52.38" y="220.30" width="8.90" height="8.90" fill="#502a5c"/><rect x="62.88" y="220.30" width="8.90" height="8.90" fill="#502a5c"/><rect x="73.38" y="220.30" width="8.90" height="8.90" fill="#502a5c"/><rect x="83.89" y="220.30" width="8.90" height="8.90" fill="#502a5c"/><rect x="94.39" y="220.30" width="8.90" height="8.90" fill="#512a5c"/><rect x="588.08" y="220.30" width="8.90" height="8.90" fill="#5b2a62"/><rect x="598.58" y="220.30" width="8.90" height="8.90" fill="#622a65"/><rect x="609.09" y="220.30" width="8.90" height="8.90" fill="#632a65"/><rect x="619.59" y="220.30" width="8.90" height="8.90" fill="#632a65"/><rect x="630.10" y="220.30" width="8.90" height="8.90" fill="#662a66"/><rect x="640.60" y="220.30" width="8.90" height="8.90" fill="#692a66"/><rect x="651.10" y="220.30" width="8.90" height="8.90" fill="#6c2a67"/><rect x="661.61" y="220.30" width="8.90" height="8.90" fill="#6c2a67"/><rect x="672.11" y="220.30" width="8.90" height="8.90" fill="#6c2a67"/><rect x="-0.14" y="230.80" width="8.90" height="8.90" fill="#562a5c"/><rect x="10.36" y="230.80" width="8.90" height="8.90" fill="#582a5c"/><rect x="20.86" y="230.80" width="8.90" height="8.90" fill="#582a5c"/><rect x="31.37" y="230.80" width="8.90" height="8.90" fill="#582a5c"/><rect x="41.87" y="230.80" width="8.90" height="8.90" fill="#582a5c"/><rect x="52.38" y="230.80" width="8.90" height="8.90" fill="#582a5c"/><rect x="62.88" y="230.80" width="8.90" height="8.90" fill="#582a5c"/><rect x="73.38" y="230.80" width="8.90" height="8.90" fill="#582a5c"/><rect x="83.89" y="230.80" width="8.90" height="8.90" fill="#582a5c"/><rect x="94.39" y="230.80" width="8.90" height="8.90" fill="#562a5d"/><rect x="588.08" y="230.80" width="8.90" height="8.90" fill="#5c2a63"/><rect x="598.58" y="230.80" width="8.90" height="8.90" fill="#622a65"/><rect x="609.09" y="230.80" width="8.90" height="8.90" fill="#642a66"/><rect x="619.59" y="230.80" width="8.90" height="8.90" fill="#642a66"/><rect x="630.10" y="230.80" width="8.90" height="8.90" fill="#642a66"/><rect x="640.60" y="230.80" width="8.90" height="8.90" fill="#642a66"/><rect x="651.10" y="230.80" width="8.90" height="8.90" fill="#642a66"/><rect x="661.61" y="230.80" width="8.90" height="8.90" fill="#642a66"/><rect x="672.11" y="230.80" width="8.90" height="8.90" fill="#642a66"/><rect x="-0.14" y="241.30" width="8.90" height="8.90" fill="#862a66"/><rect x="10.36" y="241.30" width="8.90" height="8.90" fill="#842a66"/><rect x="20.86" y="241.30" width="8.90" height="8.90" fill="#842a66"/><rect x="31.37" y="241.30" width="8.90" height="8.90" fill="#842a66"/><rect x="41.87" y="241.30" width="8.90" height="8.90" fill="#842a66"/><rect x="52.38" y="241.30" width="8.90" height="8.90" fill="#842a66"/><rect x="62.88" y="241.30" width="8.90" height="8.90" fill="#842a66"/><rect x="73.38" y="241.30" width="8.90" height="8.90" fill="#842a66"/><rect x="83.89" y="241.30" width="8.90" height="8.90" fill="#842a66"/><rect x="94.39" y="241.30" width="8.90" height="8.90" fill="#802a66"/><rect x="588.08" y="241.30" width="8.90" height="8.90" fill="#5c2a63"/><rect x="598.58" y="241.30" width="8.90" height="8.90" fill="#622a65"/><rect x="609.09" y="241.30" width="8.90" height="8.90" fill="#642a66"/><rect x="619.59" y="241.30" width="8.90" height="8.90" fill="#642a66"/><rect x="630.10" y="241.30" width="8.90" height="8.90" fill="#642a66"/><rect x="640.60" y="241.30" width="8.90" height="8.90" fill="#642a66"/><rect x="651.10" y="241.30" width="8.90" height="8.90" fill="#642a66"/><rect x="661.61" y="241.30" width="8.90" height="8.90" fill="#642a66"/><rect x="672.11" y="241.30" width="8.90" height="8.90" fill="#642a66"/><rect x="-0.14" y="251.80" width="8.90" height="8.90" fill="#8e2a68"/><rect x="10.36" y="251.80" width="8.90" height="8.90" fill="#8e2a68"/><rect x="20.86" y="251.80" width="8.90" height="8.90" fill="#8e2a68"/><rect x="31.37" y="251.80" width="8.90" height="8.90" fill="#8e2a68"/><rect x="41.87" y="251.80" width="8.90" height="8.90" fill="#8e2a68"/><rect x="52.38" y="251.80" width="8.90" height="8.90" fill="#8e2a68"/><rect x="62.88" y="251.80" width="8.90" height="8.90" fill="#8e2a68"/><rect x="73.38" y="251.80" width="8.90" height="8.90" fill="#8e2a68"/><rect x="83.89" y="251.80" width="8.90" height="8.90" fill="#8e2a68"/><rect x="94.39" y="251.80" width="8.90" height="8.90" fill="#862a67"/><rect x="588.08" y="251.80" width="8.90" height="8.90" fill="#5c2a63"/><rect x="598.58" y="251.80" width="8.90" height="8.90" fill="#622a65"/><rect x="609.09" y="251.80" width="8.90" height="8.90" fill="#642a66"/><rect x="619.59" y="251.80" width="8.90" height="8.90" fill="#642a66"/><rect x="630.10" y="251.80" width="8.90" height="8.90" fill="#642a66"/><rect x="640.60" y="251.80" width="8.90" height="8.90" fill="#642a66"/><rect x="651.10" y="251.80" width="8.90" height="8.90" fill="#642a66"/><rect x="661.61" y="251.80" width="8.90" height="8.90" fill="#642a66"/><rect x="672.11" y="251.80" width="8.90" height="8.90" fill="#642a66"/><rect x="-0.14" y="262.30" width="8.90" height="8.90" fill="#8e2a68"/><rect x="10.36" y="262.30" width="8.90" height="8.90" fill="#8e2a68"/><rect x="20.86" y="262.30" width="8.90" height="8.90" fill="#8e2a68"/><rect x="31.37" y="262.30" width="8.90" height="8.90" fill="#8e2a68"/><rect x="41.87" y="262.30" width="8.90" height="8.90" fill="#8e2a68"/><rect x="52.38" y="262.30" width="8.90" height="8.90" fill="#8e2a68"/><rect x="62.88" y="262.30" width="8.90" height="8.90" fill="#8e2a68"/><rect x="73.38" y="262.30" width="8.90" height="8.90" fill="#8e2a68"/><rect x="83.89" y="262.30" width="8.90" height="8.90" fill="#8e2a68"/><rect x="94.39" y="262.30" width="8.90" height="8.90" fill="#862a67"/><rect x="588.08" y="262.30" width="8.90" height="8.90" fill="#5c2a63"/><rect x="598.58" y="262.30" width="8.90" height="8.90" fill="#622a65"/><rect x="609.09" y="262.30" width="8.90" height="8.90" fill="#642a66"/><rect x="619.59" y="262.30" width="8.90" height="8.90" fill="#642a66"/><rect x="630.10" y="262.30" width="8.90" height="8.90" fill="#642a66"/><rect x="640.60" y="262.30" width="8.90" height="8.90" fill="#642a66"/><rect x="651.10" y="262.30" width="8.90" height="8.90" fill="#642a66"/><rect x="661.61" y="262.30" width="8.90" height="8.90" fill="#642a66"/><rect x="672.11" y="262.30" width="8.90" height="8.90" fill="#642a66"/><rect x="-0.14" y="272.80" width="8.90" height="8.90" fill="#8e2a68"/><rect x="10.36" y="272.80" width="8.90" height="8.90" fill="#8e2a68"/><rect x="20.86" y="272.80" width="8.90" height="8.90" fill="#8e2a68"/><rect x="31.37" y="272.80" width="8.90" height="8.90" fill="#8e2a68"/><rect x="41.87" y="272.80" width="8.90" height="8.90" fill="#8e2a68"/><rect x="52.38" y="272.80" width="8.90" height="8.90" fill="#8e2a68"/><rect x="62.88" y="272.80" width="8.90" height="8.90" fill="#8e2a68"/><rect x="73.38" y="272.80" width="8.90" height="8.90" fill="#8e2a68"/><rect x="83.89" y="272.80" width="8.90" height="8.90" fill="#8e2a68"/><rect x="94.39" y="272.80" width="8.90" height="8.90" fill="#862a67"/><rect x="588.08" y="272.80" width="8.90" height="8.90" fill="#5c2a63"/><rect x="598.58" y="272.80" width="8.90" height="8.90" fill="#622a65"/><rect x="609.09" y="272.80" width="8.90" height="8.90" fill="#642a66"/><rect x="619.59" y="272.80" width="8.90" height="8.90" fill="#642a66"/><rect x="630.10" y="272.80" width="8.90" height="8.90" fill="#642a66"/><rect x="640.60" y="272.80" width="8.90" height="8.90" fill="#642a66"/><rect x="651.10" y="272.80" width="8.90" height="8.90" fill="#642a66"/><rect x="661.61" y="272.80" width="8.90" height="8.90" fill="#642a66"/><rect x="672.11" y="272.80" width="8.90" height="8.90" fill="#642a66"/><rect x="-0.14" y="283.30" width="8.90" height="8.90" fill="#8e2a68"/><rect x="10.36" y="283.30" width="8.90" height="8.90" fill="#8e2a68"/><rect x="20.86" y="283.30" width="8.90" height="8.90" fill="#8e2a68"/><rect x="31.37" y="283.30" width="8.90" height="8.90" fill="#8e2a68"/><rect x="41.87" y="283.30" width="8.90" height="8.90" fill="#8e2a68"/><rect x="52.38" y="283.30" width="8.90" height="8.90" fill="#8e2a68"/><rect x="62.88" y="283.30" width="8.90" height="8.90" fill="#8e2a68"/><rect x="73.38" y="283.30" width="8.90" height="8.90" fill="#8e2a68"/><rect x="83.89" y="283.30" width="8.90" height="8.90" fill="#8e2a68"/><rect x="94.39" y="283.30" width="8.90" height="8.90" fill="#862a67"/><rect x="588.08" y="283.30" width="8.90" height="8.90" fill="#5a2a61"/><rect x="598.58" y="283.30" width="8.90" height="8.90" fill="#5f2a63"/><rect x="609.09" y="283.30" width="8.90" height="8.90" fill="#5f2a63"/><rect x="619.59" y="283.30" width="8.90" height="8.90" fill="#5f2a63"/><rect x="630.10" y="283.30" width="8.90" height="8.90" fill="#632a64"/><rect x="640.60" y="283.30" width="8.90" height="8.90" fill="#662a66"/><rect x="651.10" y="283.30" width="8.90" height="8.90" fill="#6a2b68"/><rect x="661.61" y="283.30" width="8.90" height="8.90" fill="#6a2b68"/><rect x="672.11" y="283.30" width="8.90" height="8.90" fill="#6a2b68"/><rect x="-0.14" y="293.80" width="8.90" height="8.90" fill="#932a66"/><rect x="10.36" y="293.80" width="8.90" height="8.90" fill="#952a65"/><rect x="20.86" y="293.80" width="8.90" height="8.90" fill="#952a65"/><rect x="31.37" y="293.80" width="8.90" height="8.90" fill="#952a65"/><rect x="41.87" y="293.80" width="8.90" height="8.90" fill="#952a65"/><rect x="52.38" y="293.80" width="8.90" height="8.90" fill="#932a66"/><rect x="62.88" y="293.80" width="8.90" height="8.90" fill="#902a67"/><rect x="73.38" y="293.80" width="8.90" height="8.90" fill="#8e2a68"/><rect x="83.89" y="293.80" width="8.90" height="8.90" fill="#8e2a68"/><rect x="94.39" y="293.80" width="8.90" height="8.90" fill="#862a67"/><rect x="588.08" y="293.80" width="8.90" height="8.90" fill="#582a60"/><rect x="598.58" y="293.80" width="8.90" height="8.90" fill="#4a2954"/><rect x="609.09" y="293.80" width="8.90" height="8.90" fill="#492952"/><rect x="619.59" y="293.80" width="8.90" height="8.90" fill="#492952"/><rect x="630.10" y="293.80" width="8.90" height="8.90" fill="#4c2954"/><rect x="640.60" y="293.80" width="8.90" height="8.90" fill="#762c69"/><rect x="651.10" y="293.80" width="8.90" height="8.90" fill="#7a2d6b"/><rect x="661.61" y="293.80" width="8.90" height="8.90" fill="#7a2d6b"/><rect x="672.11" y="293.80" width="8.90" height="8.90" fill="#7a2d6b"/><rect x="-0.14" y="304.30" width="8.90" height="8.90" fill="#b72a57"/><rect x="10.36" y="304.30" width="8.90" height="8.90" fill="#b52a58"/><rect x="20.86" y="304.30" width="8.90" height="8.90" fill="#b52a58"/><rect x="31.37" y="304.30" width="8.90" height="8.90" fill="#b52a58"/><rect x="41.87" y="304.30" width="8.90" height="8.90" fill="#b52a58"/><rect x="52.38" y="304.30" width="8.90" height="8.90" fill="#b02a5a"/><rect x="62.88" y="304.30" width="8.90" height="8.90" fill="#932a66"/><rect x="73.38" y="304.30" width="8.90" height="8.90" fill="#8e2a68"/><rect x="83.89" y="304.30" width="8.90" height="8.90" fill="#8e2a68"/><rect x="94.39" y="304.30" width="8.90" height="8.90" fill="#862a67"/><rect x="588.08" y="304.30" width="8.90" height="8.90" fill="#572a5f"/><rect x="598.58" y="304.30" width="8.90" height="8.90" fill="#472952"/><rect x="609.09" y="304.30" width="8.90" height="8.90" fill="#44294f"/><rect x="619.59" y="304.30" width="8.90" height="8.90" fill="#44294f"/><rect x="630.10" y="304.30" width="8.90" height="8.90" fill="#482951"/><rect x="640.60" y="304.30" width="8.90" height="8.90" fill="#4b2a52"/><rect x="651.10" y="304.30" width="8.90" height="8.90" fill="#4e2a54"/><rect x="661.61" y="304.30" width="8.90" height="8.90" fill="#4e2a54"/><rect x="672.11" y="304.30" width="8.90" height="8.90" fill="#4e2a54"/><rect x="-0.14" y="314.80" width="8.90" height="8.90" fill="#bc2a55"/><rect x="10.36" y="314.80" width="8.90" height="8.90" fill="#bc2a55"/><rect x="20.86" y="314.80" width="8.90" height="8.90" fill="#bc2a55"/><rect x="31.37" y="314.80" width="8.90" height="8.90" fill="#bc2a55"/><rect x="41.87" y="314.80" width="8.90" height="8.90" fill="#bc2a55"/><rect x="52.38" y="314.80" width="8.90" height="8.90" fill="#b52a58"/><rect x="62.88" y="314.80" width="8.90" height="8.90" fill="#952a65"/><rect x="73.38" y="314.80" width="8.90" height="8.90" fill="#8e2a68"/><rect x="83.89" y="314.80" width="8.90" height="8.90" fill="#8e2a68"/><rect x="94.39" y="314.80" width="8.90" height="8.90" fill="#862a67"/><rect x="588.08" y="314.80" width="8.90" height="8.90" fill="#572a5f"/><rect x="598.58" y="314.80" width="8.90" height="8.90" fill="#472952"/><rect x="609.09" y="314.80" width="8.90" height="8.90" fill="#44294f"/><rect x="619.59" y="314.80" width="8.90" height="8.90" fill="#44294f"/><rect x="630.10" y="314.80" width="8.90" height="8.90" fill="#44294f"/><rect x="640.60" y="314.80" width="8.90" height="8.90" fill="#44294f"/><rect x="651.10" y="314.80" width="8.90" height="8.90" fill="#44294f"/><rect x="661.61" y="314.80" width="8.90" height="8.90" fill="#44294f"/><rect x="672.11" y="314.80" width="8.90" height="8.90" fill="#44294f"/><rect x="-0.14" y="325.30" width="8.90" height="8.90" fill="#bc2a55"/><rect x="10.36" y="325.30" width="8.90" height="8.90" fill="#bc2a55"/><rect x="20.86" y="325.30" width="8.90" height="8.90" fill="#bc2a55"/><rect x="31.37" y="325.30" width="8.90" height="8.90" fill="#bc2a55"/><rect x="41.87" y="325.30" width="8.90" height="8.90" fill="#bc2a55"/><rect x="52.38" y="325.30" width="8.90" height="8.90" fill="#b72a57"/><rect x="62.88" y="325.30" width="8.90" height="8.90" fill="#972a64"/><rect x="73.38" y="325.30" width="8.90" height="8.90" fill="#902a67"/><rect x="83.89" y="325.30" width="8.90" height="8.90" fill="#8e2a68"/><rect x="94.39" y="325.30" width="8.90" height="8.90" fill="#862a67"/><rect x="588.08" y="325.30" width="8.90" height="8.90" fill="#572a5f"/><rect x="598.58" y="325.30" width="8.90" height="8.90" fill="#472952"/><rect x="609.09" y="325.30" width="8.90" height="8.90" fill="#44294f"/><rect x="619.59" y="325.30" width="8.90" height="8.90" fill="#44294f"/><rect x="630.10" y="325.30" width="8.90" height="8.90" fill="#44294f"/><rect x="640.60" y="325.30" width="8.90" height="8.90" fill="#44294f"/><rect x="651.10" y="325.30" width="8.90" height="8.90" fill="#44294f"/><rect x="661.61" y="325.30" width="8.90" height="8.90" fill="#44294f"/><rect x="672.11" y="325.30" width="8.90" height="8.90" fill="#44294f"/><rect x="-0.14" y="335.80" width="8.90" height="8.90" fill="#bc2a55"/><rect x="10.36" y="335.80" width="8.90" height="8.90" fill="#bc2a55"/><rect x="20.86" y="335.80" width="8.90" height="8.90" fill="#bc2a55"/><rect x="31.37" y="335.80" width="8.90" height="8.90" fill="#bc2a55"/><rect x="41.87" y="335.80" width="8.90" height="8.90" fill="#bc2a55"/><rect x="52.38" y="335.80" width="8.90" height="8.90" fill="#ba2a56"/><rect x="62.88" y="335.80" width="8.90" height="8.90" fill="#b32a59"/><rect x="73.38" y="335.80" width="8.90" height="8.90" fill="#932a66"/><rect x="83.89" y="335.80" width="8.90" height="8.90" fill="#8e2a68"/><rect x="94.39" y="335.80" width="8.90" height="8.90" fill="#862a67"/><rect x="588.08" y="335.80" width="8.90" height="8.90" fill="#572a5f"/><rect x="598.58" y="335.80" width="8.90" height="8.90" fill="#472952"/><rect x="609.09" y="335.80" width="8.90" height="8.90" fill="#44294f"/><rect x="619.59" y="335.80" width="8.90" height="8.90" fill="#44294f"/><rect x="630.10" y="335.80" width="8.90" height="8.90" fill="#44294f"/><rect x="640.60" y="335.80" width="8.90" height="8.90" fill="#44294f"/><rect x="651.10" y="335.80" width="8.90" height="8.90" fill="#44294f"/><rect x="661.61" y="335.80" width="8.90" height="8.90" fill="#44294f"/><rect x="672.11" y="335.80" width="8.90" height="8.90" fill="#44294f"/><rect x="-0.14" y="346.30" width="8.90" height="8.90" fill="#bc2a55"/><rect x="10.36" y="346.30" width="8.90" height="8.90" fill="#bc2a55"/><rect x="20.86" y="346.30" width="8.90" height="8.90" fill="#bc2a55"/><rect x="31.37" y="346.30" width="8.90" height="8.90" fill="#bc2a55"/><rect x="41.87" y="346.30" width="8.90" height="8.90" fill="#bc2a55"/><rect x="52.38" y="346.30" width="8.90" height="8.90" fill="#bc2a55"/><rect x="62.88" y="346.30" width="8.90" height="8.90" fill="#b72a57"/><rect x="73.38" y="346.30" width="8.90" height="8.90" fill="#972a64"/><rect x="83.89" y="346.30" width="8.90" height="8.90" fill="#902a67"/><rect x="94.39" y="346.30" width="8.90" height="8.90" fill="#862a67"/><rect x="588.08" y="346.30" width="8.90" height="8.90" fill="#572a5f"/><rect x="598.58" y="346.30" width="8.90" height="8.90" fill="#472952"/><rect x="609.09" y="346.30" width="8.90" height="8.90" fill="#44294f"/><rect x="619.59" y="346.30" width="8.90" height="8.90" fill="#44294f"/><rect x="630.10" y="346.30" width="8.90" height="8.90" fill="#44294f"/><rect x="640.60" y="346.30" width="8.90" height="8.90" fill="#44294f"/><rect x="651.10" y="346.30" width="8.90" height="8.90" fill="#44294f"/><rect x="661.61" y="346.30" width="8.90" height="8.90" fill="#44294f"/><rect x="672.11" y="346.30" width="8.90" height="8.90" fill="#44294f"/><rect x="-0.14" y="356.80" width="8.90" height="8.90" fill="#bc2a54"/><rect x="10.36" y="356.80" width="8.90" height="8.90" fill="#bd2a54"/><rect x="20.86" y="356.80" width="8.90" height="8.90" fill="#bd2a54"/><rect x="31.37" y="356.80" width="8.90" height="8.90" fill="#bd2a54"/><rect x="41.87" y="356.80" width="8.90" height="8.90" fill="#bd2a54"/><rect x="52.38" y="356.80" width="8.90" height="8.90" fill="#bd2a54"/><rect x="62.88" y="356.80" width="8.90" height="8.90" fill="#ba2a55"/><rect x="73.38" y="356.80" width="8.90" height="8.90" fill="#b32a58"/><rect x="83.89" y="356.80" width="8.90" height="8.90" fill="#922a66"/><rect x="94.39" y="356.80" width="8.90" height="8.90" fill="#882a68"/><rect x="104.90" y="356.80" width="8.90" height="8.90" fill="#662a64"/><rect x="115.40" y="356.80" width="8.90" height="8.90" fill="#612a63"/><rect x="125.90" y="356.80" width="8.90" height="8.90" fill="#5e2a62"/><rect x="136.41" y="356.80" width="8.90" height="8.90" fill="#5b2a61"/><rect x="146.91" y="356.80" width="8.90" height="8.90" fill="#582a60"/><rect x="157.42" y="356.80" width="8.90" height="8.90" fill="#582a60"/><rect x="167.92" y="356.80" width="8.90" height="8.90" fill="#582a60"/><rect x="178.42" y="356.80" width="8.90" height="8.90" fill="#582a60"/><rect x="188.93" y="356.80" width="8.90" height="8.90" fill="#582a60"/><rect x="199.43" y="356.80" width="8.90" height="8.90" fill="#582a60"/><rect x="209.94" y="356.80" width="8.90" height="8.90" fill="#582a60"/><rect x="220.44" y="356.80" width="8.90" height="8.90" fill="#572a60"/><rect x="230.94" y="356.80" width="8.90" height="8.90" fill="#562a60"/><rect x="241.45" y="356.80" width="8.90" height="8.90" fill="#552a60"/><rect x="251.95" y="356.80" width="8.90" height="8.90" fill="#552a60"/><rect x="262.46" y="356.80" width="8.90" height="8.90" fill="#552a60"/><rect x="272.96" y="356.80" width="8.90" height="8.90" fill="#552a60"/><rect x="283.46" y="356.80" width="8.90" height="8.90" fill="#552a60"/><rect x="293.97" y="356.80" width="8.90" height="8.90" fill="#552a60"/><rect x="304.47" y="356.80" width="8.90" height="8.90" fill="#552a60"/><rect x="314.98" y="356.80" width="8.90" height="8.90" fill="#552a60"/><rect x="325.48" y="356.80" width="8.90" height="8.90" fill="#562a5f"/><rect x="335.98" y="356.80" width="8.90" height="8.90" fill="#552a5f"/><rect x="346.49" y="356.80" width="8.90" height="8.90" fill="#552a5f"/><rect x="356.99" y="356.80" width="8.90" height="8.90" fill="#552a5f"/><rect x="367.50" y="356.80" width="8.90" height="8.90" fill="#552a5f"/><rect x="378.00" y="356.80" width="8.90" height="8.90" fill="#552a5f"/><rect x="388.50" y="356.80" width="8.90" height="8.90" fill="#552a5f"/><rect x="399.01" y="356.80" width="8.90" height="8.90" fill="#552a5f"/><rect x="409.51" y="356.80" width="8.90" height="8.90" fill="#542a5f"/><rect x="420.02" y="356.80" width="8.90" height="8.90" fill="#542a5e"/><rect x="430.52" y="356.80" width="8.90" height="8.90" fill="#542a5e"/><rect x="441.02" y="356.80" width="8.90" height="8.90" fill="#542a5e"/><rect x="451.53" y="356.80" width="8.90" height="8.90" fill="#542a5e"/><rect x="462.03" y="356.80" width="8.90" height="8.90" fill="#542a5e"/><rect x="472.54" y="356.80" width="8.90" height="8.90" fill="#542a5e"/><rect x="483.04" y="356.80" width="8.90" height="8.90" fill="#542a5e"/><rect x="493.54" y="356.80" width="8.90" height="8.90" fill="#542a5e"/><rect x="504.05" y="356.80" width="8.90" height="8.90" fill="#542a5e"/><rect x="514.55" y="356.80" width="8.90" height="8.90" fill="#542a5e"/><rect x="525.06" y="356.80" width="8.90" height="8.90" fill="#542a5e"/><rect x="535.56" y="356.80" width="8.90" height="8.90" fill="#542a5e"/><rect x="546.06" y="356.80" width="8.90" height="8.90" fill="#542a5e"/><rect x="556.57" y="356.80" width="8.90" height="8.90" fill="#542a5e"/><rect x="567.07" y="356.80" width="8.90" height="8.90" fill="#542a5e"/><rect x="577.58" y="356.80" width="8.90" height="8.90" fill="#542a5e"/><rect x="588.08" y="356.80" width="8.90" height="8.90" fill="#532a5d"/><rect x="598.58" y="356.80" width="8.90" height="8.90" fill="#452952"/><rect x="609.09" y="356.80" width="8.90" height="8.90" fill="#442951"/><rect x="619.59" y="356.80" width="8.90" height="8.90" fill="#442951"/><rect x="630.10" y="356.80" width="8.90" height="8.90" fill="#442951"/><rect x="640.60" y="356.80" width="8.90" height="8.90" fill="#442951"/><rect x="651.10" y="356.80" width="8.90" height="8.90" fill="#442951"/><rect x="661.61" y="356.80" width="8.90" height="8.90" fill="#442951"/><rect x="672.11" y="356.80" width="8.90" height="8.90" fill="#442951"/><rect x="-0.14" y="367.30" width="8.90" height="8.90" fill="#c02851"/><rect x="10.36" y="367.30" width="8.90" height="8.90" fill="#bf2851"/><rect x="20.86" y="367.30" width="8.90" height="8.90" fill="#bf2851"/><rect x="31.37" y="367.30" width="8.90" height="8.90" fill="#bf2851"/><rect x="41.87" y="367.30" width="8.90" height="8.90" fill="#bf2851"/><rect x="52.38" y="367.30" width="8.90" height="8.90" fill="#bf2851"/><rect x="62.88" y="367.30" width="8.90" height="8.90" fill="#bf2851"/><rect x="73.38" y="367.30" width="8.90" height="8.90" fill="#b82854"/><rect x="83.89" y="367.30" width="8.90" height="8.90" fill="#922a66"/><rect x="94.39" y="367.30" width="8.90" height="8.90" fill="#882a69"/><rect x="104.90" y="367.30" width="8.90" height="8.90" fill="#852a69"/><rect x="115.40" y="367.30" width="8.90" height="8.90" fill="#832a69"/><rect x="125.90" y="367.30" width="8.90" height="8.90" fill="#7c2a67"/><rect x="136.41" y="367.30" width="8.90" height="8.90" fill="#532a5b"/><rect x="146.91" y="367.30" width="8.90" height="8.90" fill="#4c2a5a"/><rect x="157.42" y="367.30" width="8.90" height="8.90" fill="#4c2a5a"/><rect x="167.92" y="367.30" width="8.90" height="8.90" fill="#4c2a5a"/><rect x="178.42" y="367.30" width="8.90" height="8.90" fill="#4c2a5a"/><rect x="188.93" y="367.30" width="8.90" height="8.90" fill="#4c2a5a"/><rect x="199.43" y="367.30" width="8.90" height="8.90" fill="#4c2a5a"/><rect x="209.94" y="367.30" width="8.90" height="8.90" fill="#4c2a5a"/><rect x="220.44" y="367.30" width="8.90" height="8.90" fill="#4d2a5a"/><rect x="230.94" y="367.30" width="8.90" height="8.90" fill="#432a56"/><rect x="241.45" y="367.30" width="8.90" height="8.90" fill="#412a56"/><rect x="251.95" y="367.30" width="8.90" height="8.90" fill="#3f2a54"/><rect x="262.46" y="367.30" width="8.90" height="8.90" fill="#3f2a54"/><rect x="272.96" y="367.30" width="8.90" height="8.90" fill="#3f2a54"/><rect x="283.46" y="367.30" width="8.90" height="8.90" fill="#3f2a54"/><rect x="293.97" y="367.30" width="8.90" height="8.90" fill="#3f2a54"/><rect x="304.47" y="367.30" width="8.90" height="8.90" fill="#3f2a54"/><rect x="314.98" y="367.30" width="8.90" height="8.90" fill="#3f2a54"/><rect x="325.48" y="367.30" width="8.90" height="8.90" fill="#402a54"/><rect x="335.98" y="367.30" width="8.90" height="8.90" fill="#442952"/><rect x="346.49" y="367.30" width="8.90" height="8.90" fill="#3d2950"/><rect x="356.99" y="367.30" width="8.90" height="8.90" fill="#3c294f"/><rect x="367.50" y="367.30" width="8.90" height="8.90" fill="#3b294f"/><rect x="378.00" y="367.30" width="8.90" height="8.90" fill="#3b294f"/><rect x="388.50" y="367.30" width="8.90" height="8.90" fill="#3b294f"/><rect x="399.01" y="367.30" width="8.90" height="8.90" fill="#3b294f"/><rect x="409.51" y="367.30" width="8.90" height="8.90" fill="#3b294f"/><rect x="420.02" y="367.30" width="8.90" height="8.90" fill="#37284e"/><rect x="430.52" y="367.30" width="8.90" height="8.90" fill="#36284e"/><rect x="441.02" y="367.30" width="8.90" height="8.90" fill="#36284e"/><rect x="451.53" y="367.30" width="8.90" height="8.90" fill="#36284e"/><rect x="462.03" y="367.30" width="8.90" height="8.90" fill="#36284e"/><rect x="472.54" y="367.30" width="8.90" height="8.90" fill="#36284e"/><rect x="483.04" y="367.30" width="8.90" height="8.90" fill="#36284e"/><rect x="493.54" y="367.30" width="8.90" height="8.90" fill="#36284e"/><rect x="504.05" y="367.30" width="8.90" height="8.90" fill="#36284e"/><rect x="514.55" y="367.30" width="8.90" height="8.90" fill="#36284e"/><rect x="525.06" y="367.30" width="8.90" height="8.90" fill="#36284e"/><rect x="535.56" y="367.30" width="8.90" height="8.90" fill="#36284e"/><rect x="546.06" y="367.30" width="8.90" height="8.90" fill="#36284e"/><rect x="556.57" y="367.30" width="8.90" height="8.90" fill="#36284e"/><rect x="567.07" y="367.30" width="8.90" height="8.90" fill="#36284e"/><rect x="577.58" y="367.30" width="8.90" height="8.90" fill="#36284e"/><rect x="588.08" y="367.30" width="8.90" height="8.90" fill="#37284e"/><rect x="598.58" y="367.30" width="8.90" height="8.90" fill="#452958"/><rect x="609.09" y="367.30" width="8.90" height="8.90" fill="#462958"/><rect x="619.59" y="367.30" width="8.90" height="8.90" fill="#462958"/><rect x="630.10" y="367.30" width="8.90" height="8.90" fill="#462958"/><rect x="640.60" y="367.30" width="8.90" height="8.90" fill="#462958"/><rect x="651.10" y="367.30" width="8.90" height="8.90" fill="#462958"/><rect x="661.61" y="367.30" width="8.90" height="8.90" fill="#462958"/><rect x="672.11" y="367.30" width="8.90" height="8.90" fill="#462958"/><rect x="-0.14" y="377.80" width="8.90" height="8.90" fill="#c02850"/><rect x="10.36" y="377.80" width="8.90" height="8.90" fill="#c02850"/><rect x="20.86" y="377.80" width="8.90" height="8.90" fill="#c02850"/><rect x="31.37" y="377.80" width="8.90" height="8.90" fill="#c02850"/><rect x="41.87" y="377.80" width="8.90" height="8.90" fill="#c02850"/><rect x="52.38" y="377.80" width="8.90" height="8.90" fill="#c02850"/><rect x="62.88" y="377.80" width="8.90" height="8.90" fill="#c02850"/><rect x="73.38" y="377.80" width="8.90" height="8.90" fill="#b82854"/><rect x="83.89" y="377.80" width="8.90" height="8.90" fill="#922a66"/><rect x="94.39" y="377.80" width="8.90" height="8.90" fill="#8a2a6a"/><rect x="104.90" y="377.80" width="8.90" height="8.90" fill="#8a2a6a"/><rect x="115.40" y="377.80" width="8.90" height="8.90" fill="#8a2a6a"/><rect x="125.90" y="377.80" width="8.90" height="8.90" fill="#832a68"/><rect x="136.41" y="377.80" width="8.90" height="8.90" fill="#582a5c"/><rect x="146.91" y="377.80" width="8.90" height="8.90" fill="#512a5b"/><rect x="157.42" y="377.80" width="8.90" height="8.90" fill="#512a5b"/><rect x="167.92" y="377.80" width="8.90" height="8.90" fill="#512a5b"/><rect x="178.42" y="377.80" width="8.90" height="8.90" fill="#512a5b"/><rect x="188.93" y="377.80" width="8.90" height="8.90" fill="#512a5b"/><rect x="199.43" y="377.80" width="8.90" height="8.90" fill="#512a5b"/><rect x="209.94" y="377.80" width="8.90" height="8.90" fill="#512a5b"/><rect x="220.44" y="377.80" width="8.90" height="8.90" fill="#512a5b"/><rect x="230.94" y="377.80" width="8.90" height="8.90" fill="#602a63"/><rect x="241.45" y="377.80" width="8.90" height="8.90" fill="#442a56"/><rect x="251.95" y="377.80" width="8.90" height="8.90" fill="#3f2a54"/><rect x="262.46" y="377.80" width="8.90" height="8.90" fill="#3c2a53"/><rect x="272.96" y="377.80" width="8.90" height="8.90" fill="#3a2a52"/><rect x="283.46" y="377.80" width="8.90" height="8.90" fill="#3a2a52"/><rect x="293.97" y="377.80" width="8.90" height="8.90" fill="#3a2a52"/><rect x="304.47" y="377.80" width="8.90" height="8.90" fill="#3a2a52"/><rect x="314.98" y="377.80" width="8.90" height="8.90" fill="#3a2a52"/><rect x="325.48" y="377.80" width="8.90" height="8.90" fill="#3b2a52"/><rect x="335.98" y="377.80" width="8.90" height="8.90" fill="#40294f"/><rect x="346.49" y="377.80" width="8.90" height="8.90" fill="#40294f"/><rect x="356.99" y="377.80" width="8.90" height="8.90" fill="#38294d"/><rect x="367.50" y="377.80" width="8.90" height="8.90" fill="#37294c"/><rect x="378.00" y="377.80" width="8.90" height="8.90" fill="#37294c"/><rect x="388.50" y="377.80" width="8.90" height="8.90" fill="#36294c"/><rect x="399.01" y="377.80" width="8.90" height="8.90" fill="#36294c"/><rect x="409.51" y="377.80" width="8.90" height="8.90" fill="#35294c"/><rect x="420.02" y="377.80" width="8.90" height="8.90" fill="#31284a"/><rect x="430.52" y="377.80" width="8.90" height="8.90" fill="#30284a"/><rect x="441.02" y="377.80" width="8.90" height="8.90" fill="#30284a"/><rect x="451.53" y="377.80" width="8.90" height="8.90" fill="#30284a"/><rect x="462.03" y="377.80" width="8.90" height="8.90" fill="#30284a"/><rect x="472.54" y="377.80" width="8.90" height="8.90" fill="#30284a"/><rect x="483.04" y="377.80" width="8.90" height="8.90" fill="#30284a"/><rect x="493.54" y="377.80" width="8.90" height="8.90" fill="#30284a"/><rect x="504.05" y="377.80" width="8.90" height="8.90" fill="#30284a"/><rect x="514.55" y="377.80" width="8.90" height="8.90" fill="#30284a"/><rect x="525.06" y="377.80" width="8.90" height="8.90" fill="#30284a"/><rect x="535.56" y="377.80" width="8.90" height="8.90" fill="#30284a"/><rect x="546.06" y="377.80" width="8.90" height="8.90" fill="#30284a"/><rect x="556.57" y="377.80" width="8.90" height="8.90" fill="#30284a"/><rect x="567.07" y="377.80" width="8.90" height="8.90" fill="#30284a"/><rect x="577.58" y="377.80" width="8.90" height="8.90" fill="#30284a"/><rect x="588.08" y="377.80" width="8.90" height="8.90" fill="#32284c"/><rect x="598.58" y="377.80" width="8.90" height="8.90" fill="#412956"/><rect x="609.09" y="377.80" width="8.90" height="8.90" fill="#442958"/><rect x="619.59" y="377.80" width="8.90" height="8.90" fill="#442959"/><rect x="630.10" y="377.80" width="8.90" height="8.90" fill="#452959"/><rect x="640.60" y="377.80" width="8.90" height="8.90" fill="#46295a"/><rect x="651.10" y="377.80" width="8.90" height="8.90" fill="#46295a"/><rect x="661.61" y="377.80" width="8.90" height="8.90" fill="#46295a"/><rect x="672.11" y="377.80" width="8.90" height="8.90" fill="#46295a"/><rect x="-0.14" y="388.30" width="8.90" height="8.90" fill="#c02850"/><rect x="10.36" y="388.30" width="8.90" height="8.90" fill="#c02850"/><rect x="20.86" y="388.30" width="8.90" height="8.90" fill="#c02850"/><rect x="31.37" y="388.30" width="8.90" height="8.90" fill="#c02850"/><rect x="41.87" y="388.30" width="8.90" height="8.90" fill="#c02850"/><rect x="52.38" y="388.30" width="8.90" height="8.90" fill="#c02850"/><rect x="62.88" y="388.30" width="8.90" height="8.90" fill="#c02850"/><rect x="73.38" y="388.30" width="8.90" height="8.90" fill="#b82854"/><rect x="83.89" y="388.30" width="8.90" height="8.90" fill="#922a66"/><rect x="94.39" y="388.30" width="8.90" height="8.90" fill="#8a2a6a"/><rect x="104.90" y="388.30" width="8.90" height="8.90" fill="#8a2a6a"/><rect x="115.40" y="388.30" width="8.90" height="8.90" fill="#8a2a6a"/><rect x="125.90" y="388.30" width="8.90" height="8.90" fill="#852a69"/><rect x="136.41" y="388.30" width="8.90" height="8.90" fill="#782a68"/><rect x="146.91" y="388.30" width="8.90" height="8.90" fill="#732a67"/><rect x="157.42" y="388.30" width="8.90" height="8.90" fill="#732a67"/><rect x="167.92" y="388.30" width="8.90" height="8.90" fill="#732a67"/><rect x="178.42" y="388.30" width="8.90" height="8.90" fill="#732a67"/><rect x="188.93" y="388.30" width="8.90" height="8.90" fill="#732a67"/><rect x="199.43" y="388.30" width="8.90" height="8.90" fill="#732a67"/><rect x="209.94" y="388.30" width="8.90" height="8.90" fill="#732a67"/><rect x="220.44" y="388.30" width="8.90" height="8.90" fill="#732a68"/><rect x="230.94" y="388.30" width="8.90" height="8.90" fill="#682a66"/><rect x="241.45" y="388.30" width="8.90" height="8.90" fill="#652a66"/><rect x="251.95" y="388.30" width="8.90" height="8.90" fill="#602a64"/><rect x="262.46" y="388.30" width="8.90" height="8.90" fill="#412a55"/><rect x="272.96" y="388.30" width="8.90" height="8.90" fill="#3c2a53"/><rect x="283.46" y="388.30" width="8.90" height="8.90" fill="#3a2a52"/><rect x="293.97" y="388.30" width="8.90" height="8.90" fill="#3a2a52"/><rect x="304.47" y="388.30" width="8.90" height="8.90" fill="#3a2a52"/><rect x="314.98" y="388.30" width="8.90" height="8.90" fill="#3a2a52"/><rect x="325.48" y="388.30" width="8.90" height="8.90" fill="#3b2a52"/><rect x="335.98" y="388.30" width="8.90" height="8.90" fill="#41294f"/><rect x="346.49" y="388.30" width="8.90" height="8.90" fill="#41294f"/><rect x="356.99" y="388.30" width="8.90" height="8.90" fill="#41294f"/><rect x="367.50" y="388.30" width="8.90" height="8.90" fill="#40294e"/><rect x="378.00" y="388.30" width="8.90" height="8.90" fill="#38294c"/><rect x="388.50" y="388.30" width="8.90" height="8.90" fill="#37294c"/><rect x="399.01" y="388.30" width="8.90" height="8.90" fill="#36294c"/><rect x="409.51" y="388.30" width="8.90" height="8.90" fill="#35294c"/><rect x="420.02" y="388.30" width="8.90" height="8.90" fill="#31284a"/><rect x="430.52" y="388.30" width="8.90" height="8.90" fill="#30284a"/><rect x="441.02" y="388.30" width="8.90" height="8.90" fill="#30284a"/><rect x="451.53" y="388.30" width="8.90" height="8.90" fill="#30284a"/><rect x="462.03" y="388.30" width="8.90" height="8.90" fill="#30284a"/><rect x="472.54" y="388.30" width="8.90" height="8.90" fill="#30284a"/><rect x="483.04" y="388.30" width="8.90" height="8.90" fill="#30284a"/><rect x="493.54" y="388.30" width="8.90" height="8.90" fill="#30284a"/><rect x="504.05" y="388.30" width="8.90" height="8.90" fill="#30284a"/><rect x="514.55" y="388.30" width="8.90" height="8.90" fill="#30284a"/><rect x="525.06" y="388.30" width="8.90" height="8.90" fill="#30284a"/><rect x="535.56" y="388.30" width="8.90" height="8.90" fill="#30284a"/><rect x="546.06" y="388.30" width="8.90" height="8.90" fill="#30284a"/><rect x="556.57" y="388.30" width="8.90" height="8.90" fill="#30284a"/><rect x="567.07" y="388.30" width="8.90" height="8.90" fill="#30284a"/><rect x="577.58" y="388.30" width="8.90" height="8.90" fill="#30284a"/><rect x="588.08" y="388.30" width="8.90" height="8.90" fill="#32284b"/><rect x="598.58" y="388.30" width="8.90" height="8.90" fill="#37294f"/><rect x="609.09" y="388.30" width="8.90" height="8.90" fill="#382951"/><rect x="619.59" y="388.30" width="8.90" height="8.90" fill="#392951"/><rect x="630.10" y="388.30" width="8.90" height="8.90" fill="#432958"/><rect x="640.60" y="388.30" width="8.90" height="8.90" fill="#442958"/><rect x="651.10" y="388.30" width="8.90" height="8.90" fill="#442958"/><rect x="661.61" y="388.30" width="8.90" height="8.90" fill="#442958"/><rect x="672.11" y="388.30" width="8.90" height="8.90" fill="#442958"/><rect x="-0.14" y="398.80" width="8.90" height="8.90" fill="#c02850"/><rect x="10.36" y="398.80" width="8.90" height="8.90" fill="#c02850"/><rect x="20.86" y="398.80" width="8.90" height="8.90" fill="#c02850"/><rect x="31.37" y="398.80" width="8.90" height="8.90" fill="#c02850"/><rect x="41.87" y="398.80" width="8.90" height="8.90" fill="#c02850"/><rect x="52.38" y="398.80" width="8.90" height="8.90" fill="#c02850"/><rect x="62.88" y="398.80" width="8.90" height="8.90" fill="#c02850"/><rect x="73.38" y="398.80" width="8.90" height="8.90" fill="#b82854"/><rect x="83.89" y="398.80" width="8.90" height="8.90" fill="#922a66"/><rect x="94.39" y="398.80" width="8.90" height="8.90" fill="#8a2a6a"/><rect x="104.90" y="398.80" width="8.90" height="8.90" fill="#8a2a6a"/><rect x="115.40" y="398.80" width="8.90" height="8.90" fill="#8a2a6a"/><rect x="125.90" y="398.80" width="8.90" height="8.90" fill="#882a6a"/><rect x="136.41" y="398.80" width="8.90" height="8.90" fill="#7c2a6a"/><rect x="146.91" y="398.80" width="8.90" height="8.90" fill="#7a2a6a"/><rect x="157.42" y="398.80" width="8.90" height="8.90" fill="#7a2a6a"/><rect x="167.92" y="398.80" width="8.90" height="8.90" fill="#7a2a6a"/><rect x="178.42" y="398.80" width="8.90" height="8.90" fill="#7a2a6a"/><rect x="188.93" y="398.80" width="8.90" height="8.90" fill="#7a2a6a"/><rect x="199.43" y="398.80" width="8.90" height="8.90" fill="#7a2a6a"/><rect x="209.94" y="398.80" width="8.90" height="8.90" fill="#7a2a6a"/><rect x="220.44" y="398.80" width="8.90" height="8.90" fill="#782a6a"/><rect x="230.94" y="398.80" width="8.90" height="8.90" fill="#6c2a68"/><rect x="241.45" y="398.80" width="8.90" height="8.90" fill="#6a2a68"/><rect x="251.95" y="398.80" width="8.90" height="8.90" fill="#682a67"/><rect x="262.46" y="398.80" width="8.90" height="8.90" fill="#632a65"/><rect x="272.96" y="398.80" width="8.90" height="8.90" fill="#442a56"/><rect x="283.46" y="398.80" width="8.90" height="8.90" fill="#3f2a54"/><rect x="293.97" y="398.80" width="8.90" height="8.90" fill="#3c2a53"/><rect x="304.47" y="398.80" width="8.90" height="8.90" fill="#3a2a52"/><rect x="314.98" y="398.80" width="8.90" height="8.90" fill="#3a2a52"/><rect x="325.48" y="398.80" width="8.90" height="8.90" fill="#3b2a52"/><rect x="335.98" y="398.80" width="8.90" height="8.90" fill="#41294f"/><rect x="346.49" y="398.80" width="8.90" height="8.90" fill="#42294f"/><rect x="356.99" y="398.80" width="8.90" height="8.90" fill="#42294f"/><rect x="367.50" y="398.80" width="8.90" height="8.90" fill="#41294f"/><rect x="378.00" y="398.80" width="8.90" height="8.90" fill="#40294f"/><rect x="388.50" y="398.80" width="8.90" height="8.90" fill="#38294d"/><rect x="399.01" y="398.80" width="8.90" height="8.90" fill="#37294c"/><rect x="409.51" y="398.80" width="8.90" height="8.90" fill="#36294c"/><rect x="420.02" y="398.80" width="8.90" height="8.90" fill="#31284a"/><rect x="430.52" y="398.80" width="8.90" height="8.90" fill="#30284a"/><rect x="441.02" y="398.80" width="8.90" height="8.90" fill="#30284a"/><rect x="451.53" y="398.80" width="8.90" height="8.90" fill="#30284a"/><rect x="462.03" y="398.80" width="8.90" height="8.90" fill="#30284a"/><rect x="472.54" y="398.80" width="8.90" height="8.90" fill="#30284a"/><rect x="483.04" y="398.80" width="8.90" height="8.90" fill="#30284a"/><rect x="493.54" y="398.80" width="8.90" height="8.90" fill="#30284a"/><rect x="504.05" y="398.80" width="8.90" height="8.90" fill="#30284a"/><rect x="514.55" y="398.80" width="8.90" height="8.90" fill="#30284a"/><rect x="525.06" y="398.80" width="8.90" height="8.90" fill="#30284a"/><rect x="535.56" y="398.80" width="8.90" height="8.90" fill="#30284a"/><rect x="546.06" y="398.80" width="8.90" height="8.90" fill="#30284a"/><rect x="556.57" y="398.80" width="8.90" height="8.90" fill="#30284a"/><rect x="567.07" y="398.80" width="8.90" height="8.90" fill="#30284a"/><rect x="577.58" y="398.80" width="8.90" height="8.90" fill="#30284a"/><rect x="588.08" y="398.80" width="8.90" height="8.90" fill="#31284b"/><rect x="598.58" y="398.80" width="8.90" height="8.90" fill="#35294e"/><rect x="609.09" y="398.80" width="8.90" height="8.90" fill="#36294f"/><rect x="619.59" y="398.80" width="8.90" height="8.90" fill="#372950"/><rect x="630.10" y="398.80" width="8.90" height="8.90" fill="#382950"/><rect x="640.60" y="398.80" width="8.90" height="8.90" fill="#382951"/><rect x="651.10" y="398.80" width="8.90" height="8.90" fill="#382951"/><rect x="661.61" y="398.80" width="8.90" height="8.90" fill="#382951"/><rect x="672.11" y="398.80" width="8.90" height="8.90" fill="#382951"/><rect x="-0.14" y="409.30" width="8.90" height="8.90" fill="#c02850"/><rect x="10.36" y="409.30" width="8.90" height="8.90" fill="#c02850"/><rect x="20.86" y="409.30" width="8.90" height="8.90" fill="#c02850"/><rect x="31.37" y="409.30" width="8.90" height="8.90" fill="#c02850"/><rect x="41.87" y="409.30" width="8.90" height="8.90" fill="#c02850"/><rect x="52.38" y="409.30" width="8.90" height="8.90" fill="#c02850"/><rect x="62.88" y="409.30" width="8.90" height="8.90" fill="#c02850"/><rect x="73.38" y="409.30" width="8.90" height="8.90" fill="#b82854"/><rect x="83.89" y="409.30" width="8.90" height="8.90" fill="#922a66"/><rect x="94.39" y="409.30" width="8.90" height="8.90" fill="#8a2a6a"/><rect x="104.90" y="409.30" width="8.90" height="8.90" fill="#8a2a6a"/><rect x="115.40" y="409.30" width="8.90" height="8.90" fill="#8a2a6a"/><rect x="125.90" y="409.30" width="8.90" height="8.90" fill="#882a6a"/><rect x="136.41" y="409.30" width="8.90" height="8.90" fill="#7c2a6a"/><rect x="146.91" y="409.30" width="8.90" height="8.90" fill="#7a2a6a"/><rect x="157.42" y="409.30" width="8.90" height="8.90" fill="#7a2a6a"/><rect x="167.92" y="409.30" width="8.90" height="8.90" fill="#7a2a6a"/><rect x="178.42" y="409.30" width="8.90" height="8.90" fill="#7a2a6a"/><rect x="188.93" y="409.30" width="8.90" height="8.90" fill="#7a2a6a"/><rect x="199.43" y="409.30" width="8.90" height="8.90" fill="#7a2a6a"/><rect x="209.94" y="409.30" width="8.90" height="8.90" fill="#7a2a6a"/><rect x="220.44" y="409.30" width="8.90" height="8.90" fill="#782a6a"/><rect x="230.94" y="409.30" width="8.90" height="8.90" fill="#6c2a68"/><rect x="241.45" y="409.30" width="8.90" height="8.90" fill="#6a2a68"/><rect x="251.95" y="409.30" width="8.90" height="8.90" fill="#6a2a68"/><rect x="262.46" y="409.30" width="8.90" height="8.90" fill="#682a67"/><rect x="272.96" y="409.30" width="8.90" height="8.90" fill="#652a66"/><rect x="283.46" y="409.30" width="8.90" height="8.90" fill="#602a64"/><rect x="293.97" y="409.30" width="8.90" height="8.90" fill="#412a55"/><rect x="304.47" y="409.30" width="8.90" height="8.90" fill="#3c2a53"/><rect x="314.98" y="409.30" width="8.90" height="8.90" fill="#3a2a52"/><rect x="325.48" y="409.30" width="8.90" height="8.90" fill="#3b2a52"/><rect x="335.98" y="409.30" width="8.90" height="8.90" fill="#41294f"/><rect x="346.49" y="409.30" width="8.90" height="8.90" fill="#42294f"/><rect x="356.99" y="409.30" width="8.90" height="8.90" fill="#42294f"/><rect x="367.50" y="409.30" width="8.90" height="8.90" fill="#42294f"/><rect x="378.00" y="409.30" width="8.90" height="8.90" fill="#41294f"/><rect x="388.50" y="409.30" width="8.90" height="8.90" fill="#41294f"/><rect x="399.01" y="409.30" width="8.90" height="8.90" fill="#40294e"/><rect x="409.51" y="409.30" width="8.90" height="8.90" fill="#37294c"/><rect x="420.02" y="409.30" width="8.90" height="8.90" fill="#32284a"/><rect x="430.52" y="409.30" width="8.90" height="8.90" fill="#30284a"/><rect x="441.02" y="409.30" width="8.90" height="8.90" fill="#30284a"/><rect x="451.53" y="409.30" width="8.90" height="8.90" fill="#30284a"/><rect x="462.03" y="409.30" width="8.90" height="8.90" fill="#30284a"/><rect x="472.54" y="409.30" width="8.90" height="8.90" fill="#30284a"/><rect x="483.04" y="409.30" width="8.90" height="8.90" fill="#30284a"/><rect x="493.54" y="409.30" width="8.90" height="8.90" fill="#30284a"/><rect x="504.05" y="409.30" width="8.90" height="8.90" fill="#30284a"/><rect x="514.55" y="409.30" width="8.90" height="8.90" fill="#30284a"/><rect x="525.06" y="409.30" width="8.90" height="8.90" fill="#30284a"/><rect x="535.56" y="409.30" width="8.90" height="8.90" fill="#30284a"/><rect x="546.06" y="409.30" width="8.90" height="8.90" fill="#30284a"/><rect x="556.57" y="409.30" width="8.90" height="8.90" fill="#30284a"/><rect x="567.07" y="409.30" width="8.90" height="8.90" fill="#30284a"/><rect x="577.58" y="409.30" width="8.90" height="8.90" fill="#30284a"/><rect x="588.08" y="409.30" width="8.90" height="8.90" fill="#31284b"/><rect x="598.58" y="409.30" width="8.90" height="8.90" fill="#35294e"/><rect x="609.09" y="409.30" width="8.90" height="8.90" fill="#36294f"/><rect x="619.59" y="409.30" width="8.90" height="8.90" fill="#36294f"/><rect x="630.10" y="409.30" width="8.90" height="8.90" fill="#36294f"/><rect x="640.60" y="409.30" width="8.90" height="8.90" fill="#36294f"/><rect x="651.10" y="409.30" width="8.90" height="8.90" fill="#36294f"/><rect x="661.61" y="409.30" width="8.90" height="8.90" fill="#36294f"/><rect x="672.11" y="409.30" width="8.90" height="8.90" fill="#36294f"/><rect x="-0.14" y="419.80" width="8.90" height="8.90" fill="#c02850"/><rect x="10.36" y="419.80" width="8.90" height="8.90" fill="#c02850"/><rect x="20.86" y="419.80" width="8.90" height="8.90" fill="#c02850"/><rect x="31.37" y="419.80" width="8.90" height="8.90" fill="#c02850"/><rect x="41.87" y="419.80" width="8.90" height="8.90" fill="#c02850"/><rect x="52.38" y="419.80" width="8.90" height="8.90" fill="#c02850"/><rect x="62.88" y="419.80" width="8.90" height="8.90" fill="#c02850"/><rect x="73.38" y="419.80" width="8.90" height="8.90" fill="#b82854"/><rect x="83.89" y="419.80" width="8.90" height="8.90" fill="#922a66"/><rect x="94.39" y="419.80" width="8.90" height="8.90" fill="#8a2a6a"/><rect x="104.90" y="419.80" width="8.90" height="8.90" fill="#8a2a6a"/><rect x="115.40" y="419.80" width="8.90" height="8.90" fill="#8a2a6a"/><rect x="125.90" y="419.80" width="8.90" height="8.90" fill="#882a6a"/><rect x="136.41" y="419.80" width="8.90" height="8.90" fill="#7c2a6a"/><rect x="146.91" y="419.80" width="8.90" height="8.90" fill="#7a2a6a"/><rect x="157.42" y="419.80" width="8.90" height="8.90" fill="#7a2a6a"/><rect x="167.92" y="419.80" width="8.90" height="8.90" fill="#7a2a6a"/><rect x="178.42" y="419.80" width="8.90" height="8.90" fill="#7a2a6a"/><rect x="188.93" y="419.80" width="8.90" height="8.90" fill="#7a2a6a"/><rect x="199.43" y="419.80" width="8.90" height="8.90" fill="#7a2a6a"/><rect x="209.94" y="419.80" width="8.90" height="8.90" fill="#7a2a6a"/><rect x="220.44" y="419.80" width="8.90" height="8.90" fill="#782a6a"/><rect x="230.94" y="419.80" width="8.90" height="8.90" fill="#6c2a68"/><rect x="241.45" y="419.80" width="8.90" height="8.90" fill="#6a2a68"/><rect x="251.95" y="419.80" width="8.90" height="8.90" fill="#6a2a68"/><rect x="262.46" y="419.80" width="8.90" height="8.90" fill="#6a2a68"/><rect x="272.96" y="419.80" width="8.90" height="8.90" fill="#6a2a68"/><rect x="283.46" y="419.80" width="8.90" height="8.90" fill="#682a67"/><rect x="293.97" y="419.80" width="8.90" height="8.90" fill="#632a65"/><rect x="304.47" y="419.80" width="8.90" height="8.90" fill="#442a56"/><rect x="314.98" y="419.80" width="8.90" height="8.90" fill="#3f2a54"/><rect x="325.48" y="419.80" width="8.90" height="8.90" fill="#3e2a53"/><rect x="335.98" y="419.80" width="8.90" height="8.90" fill="#41294f"/><rect x="346.49" y="419.80" width="8.90" height="8.90" fill="#42294f"/><rect x="356.99" y="419.80" width="8.90" height="8.90" fill="#42294f"/><rect x="367.50" y="419.80" width="8.90" height="8.90" fill="#42294f"/><rect x="378.00" y="419.80" width="8.90" height="8.90" fill="#42294f"/><rect x="388.50" y="419.80" width="8.90" height="8.90" fill="#42294f"/><rect x="399.01" y="419.80" width="8.90" height="8.90" fill="#41294f"/><rect x="409.51" y="419.80" width="8.90" height="8.90" fill="#3f294e"/><rect x="420.02" y="419.80" width="8.90" height="8.90" fill="#32284b"/><rect x="430.52" y="419.80" width="8.90" height="8.90" fill="#30284a"/><rect x="441.02" y="419.80" width="8.90" height="8.90" fill="#30284a"/><rect x="451.53" y="419.80" width="8.90" height="8.90" fill="#30284a"/><rect x="462.03" y="419.80" width="8.90" height="8.90" fill="#30284a"/><rect x="472.54" y="419.80" width="8.90" height="8.90" fill="#30284a"/><rect x="483.04" y="419.80" width="8.90" height="8.90" fill="#30284a"/><rect x="493.54" y="419.80" width="8.90" height="8.90" fill="#30284a"/><rect x="504.05" y="419.80" width="8.90" height="8.90" fill="#30284a"/><rect x="514.55" y="419.80" width="8.90" height="8.90" fill="#30284a"/><rect x="525.06" y="419.80" width="8.90" height="8.90" fill="#30284a"/><rect x="535.56" y="419.80" width="8.90" height="8.90" fill="#30284a"/><rect x="546.06" y="419.80" width="8.90" height="8.90" fill="#30284a"/><rect x="556.57" y="419.80" width="8.90" height="8.90" fill="#30284a"/><rect x="567.07" y="419.80" width="8.90" height="8.90" fill="#30284a"/><rect x="577.58" y="419.80" width="8.90" height="8.90" fill="#30284a"/><rect x="588.08" y="419.80" width="8.90" height="8.90" fill="#31284b"/><rect x="598.58" y="419.80" width="8.90" height="8.90" fill="#35294e"/><rect x="609.09" y="419.80" width="8.90" height="8.90" fill="#36294f"/><rect x="619.59" y="419.80" width="8.90" height="8.90" fill="#36294f"/><rect x="630.10" y="419.80" width="8.90" height="8.90" fill="#36294f"/><rect x="640.60" y="419.80" width="8.90" height="8.90" fill="#36294f"/><rect x="651.10" y="419.80" width="8.90" height="8.90" fill="#36294f"/><rect x="661.61" y="419.80" width="8.90" height="8.90" fill="#36294f"/><rect x="672.11" y="419.80" width="8.90" height="8.90" fill="#36294f"/><rect x="-0.14" y="430.30" width="8.90" height="8.90" fill="#c02850"/><rect x="10.36" y="430.30" width="8.90" height="8.90" fill="#c02850"/><rect x="20.86" y="430.30" width="8.90" height="8.90" fill="#c02850"/><rect x="31.37" y="430.30" width="8.90" height="8.90" fill="#c02850"/><rect x="41.87" y="430.30" width="8.90" height="8.90" fill="#c02850"/><rect x="52.38" y="430.30" width="8.90" height="8.90" fill="#c02850"/><rect x="62.88" y="430.30" width="8.90" height="8.90" fill="#c02850"/><rect x="73.38" y="430.30" width="8.90" height="8.90" fill="#b82854"/><rect x="83.89" y="430.30" width="8.90" height="8.90" fill="#922a66"/><rect x="94.39" y="430.30" width="8.90" height="8.90" fill="#8a2a6a"/><rect x="104.90" y="430.30" width="8.90" height="8.90" fill="#8a2a6a"/><rect x="115.40" y="430.30" width="8.90" height="8.90" fill="#8a2a6a"/><rect x="125.90" y="430.30" width="8.90" height="8.90" fill="#882a6a"/><rect x="136.41" y="430.30" width="8.90" height="8.90" fill="#7c2a6a"/><rect x="146.91" y="430.30" width="8.90" height="8.90" fill="#7a2a6a"/><rect x="157.42" y="430.30" width="8.90" height="8.90" fill="#7a2a6a"/><rect x="167.92" y="430.30" width="8.90" height="8.90" fill="#7a2a6a"/><rect x="178.42" y="430.30" width="8.90" height="8.90" fill="#7a2a6a"/><rect x="188.93" y="430.30" width="8.90" height="8.90" fill="#7a2a6a"/><rect x="199.43" y="430.30" width="8.90" height="8.90" fill="#7a2a6a"/><rect x="209.94" y="430.30" width="8.90" height="8.90" fill="#7a2a6a"/><rect x="220.44" y="430.30" width="8.90" height="8.90" fill="#782a6a"/><rect x="230.94" y="430.30" width="8.90" height="8.90" fill="#6c2a68"/><rect x="241.45" y="430.30" width="8.90" height="8.90" fill="#6a2a68"/><rect x="251.95" y="430.30" width="8.90" height="8.90" fill="#6a2a68"/><rect x="262.46" y="430.30" width="8.90" height="8.90" fill="#6a2a68"/><rect x="272.96" y="430.30" width="8.90" height="8.90" fill="#6a2a68"/><rect x="283.46" y="430.30" width="8.90" height="8.90" fill="#6a2a68"/><rect x="293.97" y="430.30" width="8.90" height="8.90" fill="#682a67"/><rect x="304.47" y="430.30" width="8.90" height="8.90" fill="#652a66"/><rect x="314.98" y="430.30" width="8.90" height="8.90" fill="#602a64"/><rect x="325.48" y="430.30" width="8.90" height="8.90" fill="#422a55"/><rect x="335.98" y="430.30" width="8.90" height="8.90" fill="#432951"/><rect x="346.49" y="430.30" width="8.90" height="8.90" fill="#42294f"/><rect x="356.99" y="430.30" width="8.90" height="8.90" fill="#42294f"/><rect x="367.50" y="430.30" width="8.90" height="8.90" fill="#42294f"/><rect x="378.00" y="430.30" width="8.90" height="8.90" fill="#42294f"/><rect x="388.50" y="430.30" width="8.90" height="8.90" fill="#42294f"/><rect x="399.01" y="430.30" width="8.90" height="8.90" fill="#42294f"/><rect x="409.51" y="430.30" width="8.90" height="8.90" fill="#3f294e"/><rect x="420.02" y="430.30" width="8.90" height="8.90" fill="#33284b"/><rect x="430.52" y="430.30" width="8.90" height="8.90" fill="#30284a"/><rect x="441.02" y="430.30" width="8.90" height="8.90" fill="#30284a"/><rect x="451.53" y="430.30" width="8.90" height="8.90" fill="#30284a"/><rect x="462.03" y="430.30" width="8.90" height="8.90" fill="#30284a"/><rect x="472.54" y="430.30" width="8.90" height="8.90" fill="#30284a"/><rect x="483.04" y="430.30" width="8.90" height="8.90" fill="#30284a"/><rect x="493.54" y="430.30" width="8.90" height="8.90" fill="#30284a"/><rect x="504.05" y="430.30" width="8.90" height="8.90" fill="#30284a"/><rect x="514.55" y="430.30" width="8.90" height="8.90" fill="#30284a"/><rect x="525.06" y="430.30" width="8.90" height="8.90" fill="#30284a"/><rect x="535.56" y="430.30" width="8.90" height="8.90" fill="#30284a"/><rect x="546.06" y="430.30" width="8.90" height="8.90" fill="#30284a"/><rect x="556.57" y="430.30" width="8.90" height="8.90" fill="#30284a"/><rect x="567.07" y="430.30" width="8.90" height="8.90" fill="#30284a"/><rect x="577.58" y="430.30" width="8.90" height="8.90" fill="#30284a"/><rect x="588.08" y="430.30" width="8.90" height="8.90" fill="#31284b"/><rect x="598.58" y="430.30" width="8.90" height="8.90" fill="#35294e"/><rect x="609.09" y="430.30" width="8.90" height="8.90" fill="#36294f"/><rect x="619.59" y="430.30" width="8.90" height="8.90" fill="#36294f"/><rect x="630.10" y="430.30" width="8.90" height="8.90" fill="#36294f"/><rect x="640.60" y="430.30" width="8.90" height="8.90" fill="#36294f"/><rect x="651.10" y="430.30" width="8.90" height="8.90" fill="#36294f"/><rect x="661.61" y="430.30" width="8.90" height="8.90" fill="#36294f"/><rect x="672.11" y="430.30" width="8.90" height="8.90" fill="#36294f"/></svg><div class="win"><div class="hdr"></div><div class="tbtn"></div><svg class="ic" style="left:6.00px;top:6.20px" width="7" height="7" viewBox="0 0 7 7"><rect x="1.2" y="1.4" width="2.5" height="4.4" fill="#9a9a9a"/><rect x="0.9" y="0.9" width="5.5" height="5.6" rx="1.3" fill="none" stroke="#2e2e2e" stroke-width="1.05"/><path d="M3.8 1V6.4" stroke="#2e2e2e" stroke-width="0.7"/></svg><div class="title">sshPilot</div><div class="close"></div><svg class="ic" style="left:496.30px;top:7.40px" width="5" height="5" viewBox="0 0 5 5"><path d="M0.8 0.8L4.2 4.2M4.2 0.8L0.8 4.2" stroke="#1a1a1a" stroke-width="1.2"/></svg><div class="side"></div><div class="conn">Connections</div><div class="sbtn" style="left:74.2px"></div><div class="sbtn" style="left:91.2px"></div><div class="sbtn" style="left:108.2px"></div><svg class="ic" style="left:77.90px;top:29.10px" width="6.4" height="6.0" viewBox="0 0 12 12"><path d="M6 0.5V11.5M0.5 6H11.5" stroke="#2e2e2e" stroke-width="1.9"/></svg><svg class="ic" style="left:94.80px;top:29.10px" width="6.2" height="5.8" viewBox="0 0 12 12"><path d="M0 1.2H12M0 4.4H12M0 7.6H12M0 10.8H12" stroke="#2e2e2e" stroke-width="1.5" opacity=".75"/><rect x="0" y="0.5" width="12" height="11" fill="#2e2e2e" opacity=".35"/></svg><svg class="ic" style="left:111.20px;top:28.60px" width="7.2" height="6.6" viewBox="0 0 14 13"><path d="M1.3 6.5C3 3.3 5 2.2 7 2.2S11 3.3 12.7 6.5C11 9.7 9 10.8 7 10.8S3 9.7 1.3 6.5Z" fill="none" stroke="#2e2e2e" stroke-width="2.2"/><circle cx="7" cy="6.5" r="1.7" fill="#2e2e2e"/><path d="M2.2 1L12 12" stroke="#2e2e2e" stroke-width="2.2"/></svg><div class="row sel" style="top:41.90px"></div><svg class="ic" style="left:5.70px;top:49.90px" width="7.4" height="7.4" viewBox="0 0 14 14"><rect x="1" y="1" width="12" height="9" rx="2" fill="none" stroke="#4a3a32" stroke-width="1.9"/><path d="M4.5 12.9h5" stroke="#4a3a32" stroke-width="1.9"/></svg><div class="rt" style="top:45.00px">bender</div><svg class="ic" style="left:18.00px;top:56.50px" width="35" height="2.2" viewBox="0 0 35 2.2"><path d="M1.00 0.2v1.6M0.30 1h1.4" stroke="#7a6a60" stroke-width="0.9"/><path d="M4.55 0.2v1.6M3.85 1h1.4" stroke="#7a6a60" stroke-width="0.9"/><path d="M8.10 0.2v1.6M7.40 1h1.4" stroke="#7a6a60" stroke-width="0.9"/><path d="M11.65 0.2v1.6M10.95 1h1.4" stroke="#7a6a60" stroke-width="0.9"/><path d="M15.20 0.2v1.6M14.50 1h1.4" stroke="#7a6a60" stroke-width="0.9"/><path d="M18.75 0.2v1.6M18.05 1h1.4" stroke="#7a6a60" stroke-width="0.9"/><path d="M22.30 0.2v1.6M21.60 1h1.4" stroke="#7a6a60" stroke-width="0.9"/><path d="M25.85 0.2v1.6M25.15 1h1.4" stroke="#7a6a60" stroke-width="0.9"/><path d="M29.40 0.2v1.6M28.70 1h1.4" stroke="#7a6a60" stroke-width="0.9"/><path d="M32.95 0.2v1.6M32.25 1h1.4" stroke="#7a6a60" stroke-width="0.9"/></svg><svg class="ic" style="left:113.80px;top:49.80px" width="7.8" height="7.2" viewBox="0 0 14 14"><g transform="rotate(-15 7 7)"><path d="M3 4.6H10.5" stroke="#86685a" stroke-width="2.2"/><path d="M9.6 1.6L13 4.6L9.6 7.6Z" fill="#86685a"/><path d="M11 9.4H3.5" stroke="#86685a" stroke-width="2.2"/><path d="M4.4 6.4L1 9.4L4.4 12.4Z" fill="#86685a"/></g></svg><svg class="ic" style="left:5.70px;top:72.50px" width="7.4" height="7.4" viewBox="0 0 14 14"><rect x="1" y="1" width="12" height="9" rx="2" fill="none" stroke="#2e2e2e" stroke-width="1.9"/><path d="M4.5 12.9h5" stroke="#2e2e2e" stroke-width="1.9"/></svg><div class="rt" style="top:67.60px">linuxundich.de</div><svg class="ic" style="left:18.00px;top:79.10px" width="35" height="2.2" viewBox="0 0 35 2.2"><path d="M1.00 0.2v1.6M0.30 1h1.4" stroke="#7a7a7a" stroke-width="0.9"/><path d="M4.55 0.2v1.6M3.85 1h1.4" stroke="#7a7a7a" stroke-width="0.9"/><path d="M8.10 0.2v1.6M7.40 1h1.4" stroke="#7a7a7a" stroke-width="0.9"/><path d="M11.65 0.2v1.6M10.95 1h1.4" stroke="#7a7a7a" stroke-width="0.9"/><path d="M15.20 0.2v1.6M14.50 1h1.4" stroke="#7a7a7a" stroke-width="0.9"/><path d="M18.75 0.2v1.6M18.05 1h1.4" stroke="#7a7a7a" stroke-width="0.9"/><path d="M22.30 0.2v1.6M21.60 1h1.4" stroke="#7a7a7a" stroke-width="0.9"/><path d="M25.85 0.2v1.6M25.15 1h1.4" stroke="#7a7a7a" stroke-width="0.9"/><path d="M29.40 0.2v1.6M28.70 1h1.4" stroke="#7a7a7a" stroke-width="0.9"/><path d="M32.95 0.2v1.6M32.25 1h1.4" stroke="#7a7a7a" stroke-width="0.9"/></svg><svg class="ic" style="left:114.20px;top:72.50px" width="7.3" height="7.3" viewBox="0 0 14 14"><path d="M3.5 4H10" stroke="#a6a6a6" stroke-width="2.1"/><path d="M9.2 1.2L12.8 4L9.2 6.8Z" fill="#a6a6a6"/><path d="M8 8.4H4" stroke="#a6a6a6" stroke-width="2.1"/><path d="M4.8 5.6L1.2 8.4L4.8 11.2Z" fill="#a6a6a6"/><rect x="8.6" y="8.4" width="4.4" height="4.4" fill="#1e1e1e"/></svg><svg class="ic" style="left:5.70px;top:95.10px" width="7.4" height="7.4" viewBox="0 0 14 14"><rect x="1" y="1" width="12" height="9" rx="2" fill="none" stroke="#2e2e2e" stroke-width="1.9"/><path d="M4.5 12.9h5" stroke="#2e2e2e" stroke-width="1.9"/></svg><div class="rt" style="top:90.20px">piserv</div><svg class="ic" style="left:18.00px;top:101.70px" width="35" height="2.2" viewBox="0 0 35 2.2"><path d="M1.00 0.2v1.6M0.30 1h1.4" stroke="#7a7a7a" stroke-width="0.9"/><path d="M4.55 0.2v1.6M3.85 1h1.4" stroke="#7a7a7a" stroke-width="0.9"/><path d="M8.10 0.2v1.6M7.40 1h1.4" stroke="#7a7a7a" stroke-width="0.9"/><path d="M11.65 0.2v1.6M10.95 1h1.4" stroke="#7a7a7a" stroke-width="0.9"/><path d="M15.20 0.2v1.6M14.50 1h1.4" stroke="#7a7a7a" stroke-width="0.9"/><path d="M18.75 0.2v1.6M18.05 1h1.4" stroke="#7a7a7a" stroke-width="0.9"/><path d="M22.30 0.2v1.6M21.60 1h1.4" stroke="#7a7a7a" stroke-width="0.9"/><path d="M25.85 0.2v1.6M25.15 1h1.4" stroke="#7a7a7a" stroke-width="0.9"/><path d="M29.40 0.2v1.6M28.70 1h1.4" stroke="#7a7a7a" stroke-width="0.9"/><path d="M32.95 0.2v1.6M32.25 1h1.4" stroke="#7a7a7a" stroke-width="0.9"/></svg><svg class="ic" style="left:114.20px;top:95.10px" width="7.3" height="7.3" viewBox="0 0 14 14"><path d="M3.5 4H10" stroke="#a6a6a6" stroke-width="2.1"/><path d="M9.2 1.2L12.8 4L9.2 6.8Z" fill="#a6a6a6"/><path d="M8 8.4H4" stroke="#a6a6a6" stroke-width="2.1"/><path d="M4.8 5.6L1.2 8.4L4.8 11.2Z" fill="#a6a6a6"/><rect x="8.6" y="8.4" width="4.4" height="4.4" fill="#1e1e1e"/></svg><svg class="ic" style="left:8.90px;top:294.40px" width="7" height="7" viewBox="0 0 14 14"><path d="M2.6 11.4L11 3" stroke="#2e2e2e" stroke-width="3.4" stroke-linecap="round"/><path d="M4.5 9.5L9.5 4.5" stroke="#777" stroke-width="0.8"/></svg><svg class="ic" style="left:25.40px;top:294.40px" width="7" height="7" viewBox="0 0 14 14"><circle cx="4.6" cy="4.6" r="3.4" fill="#2e2e2e"/><path d="M6 6L12.5 12.5M9.5 9.5L11 8" stroke="#2e2e2e" stroke-width="2.4"/></svg><svg class="ic" style="left:42.60px;top:293.80px" width="6.6" height="7.6" viewBox="0 0 13 15"><path d="M1.2 2.2Q1.2 1 2.4 1H8L11.8 4.8V12.6Q11.8 13.8 10.6 13.8H2.4Q1.2 13.8 1.2 12.6Z" fill="none" stroke="#2e2e2e" stroke-width="1.7"/><path d="M6.5 6.2V11.6M3.8 8.9H9.2" stroke="#2e2e2e" stroke-width="1.8"/></svg><svg class="ic" style="left:58.80px;top:294.60px" width="7.4" height="6.4" viewBox="0 0 15 13"><path d="M1 2.2Q1 1 2.2 1H5.6L7 2.6H12.8Q14 2.6 14 3.8V10.8Q14 12 12.8 12H2.2Q1 12 1 10.8Z" fill="none" stroke="#2e2e2e" stroke-width="1.7"/><path d="M1 5H14" stroke="#2e2e2e" stroke-width="1.4"/></svg><svg class="ic" style="left:75.90px;top:294.00px" width="6.8" height="7" viewBox="0 0 14 14"><rect x="1" y="1" width="12" height="12" rx="2" fill="none" stroke="#2e2e2e" stroke-width="1.7"/><path d="M3.8 5L5.8 7L3.8 9M6.8 10H9.5" fill="none" stroke="#2e2e2e" stroke-width="1.5"/></svg><svg class="ic" style="left:92.90px;top:293.90px" width="6.6" height="7.6" viewBox="0 0 13 15"><path d="M0.5 3H12.5M4.5 3V1.2H8.5V3" fill="none" stroke="#2e2e2e" stroke-width="1.6"/><path d="M2 4.5L2.8 13.2Q2.9 14 3.7 14H9.3Q10.1 14 10.2 13.2L11 4.5" fill="none" stroke="#2e2e2e" stroke-width="1.7"/><path d="M5 6V12M8 6V12" stroke="#2e2e2e" stroke-width="1.2"/></svg><div class="tabs"></div><div class="sep" style="left:255.4px"></div><div class="tab act" style="left:383px;width:123.8px"></div><svg class="ic" style="left:165.30px;top:25.80px" width="7.0" height="7.0" viewBox="0 0 14 14"><rect x="1" y="1.2" width="12" height="11.6" rx="2.4" fill="none" stroke="#3a3a3a" stroke-width="1.8"/><path d="M1.5 2.2H12.5" stroke="#3a3a3a" stroke-width="1.6"/><path d="M3.8 5.2L6.3 7.6L3.8 10M7 10.6H9.8" fill="none" stroke="#3a3a3a" stroke-width="1.3" opacity=".75"/></svg><svg class="ic" style="left:279.70px;top:25.80px" width="7.0" height="7.0" viewBox="0 0 14 14"><rect x="1" y="1.2" width="12" height="11.6" rx="2.4" fill="none" stroke="#3a3a3a" stroke-width="1.8"/><path d="M1.5 2.2H12.5" stroke="#3a3a3a" stroke-width="1.6"/><path d="M3.8 5.2L6.3 7.6L3.8 10M7 10.6H9.8" fill="none" stroke="#3a3a3a" stroke-width="1.3" opacity=".75"/></svg><svg class="ic" style="left:405.00px;top:25.80px" width="7.0" height="7.0" viewBox="0 0 14 14"><rect x="1" y="1.2" width="12" height="11.6" rx="2.4" fill="none" stroke="#3a3a3a" stroke-width="1.8"/><path d="M1.5 2.2H12.5" stroke="#3a3a3a" stroke-width="1.6"/><path d="M3.8 5.2L6.3 7.6L3.8 10M7 10.6H9.8" fill="none" stroke="#3a3a3a" stroke-width="1.3" opacity=".75"/></svg><div class="tabt" style="left:175px">Local Terminal</div><div class="tabt" style="left:289.6px">piserv - toff@piserv: ~</div><div class="tabt" style="left:414.4px">bender - toff@bender:~</div><svg class="ic" style="left:497.60px;top:27.20px" width="5" height="5" viewBox="0 0 5 5"><path d="M0.9 0.9L4.1 4.1M4.1 0.9L0.9 4.1" stroke="#1a1a1a" stroke-width="1.2"/></svg><div class="term"><pre><span class="fg">[toff@bender ~]$ neofetch</span>
<span class="cy">                   -`</span>                    <b class="cy">toff</b><b class="fg">@</b><b class="cy">bender</b>
<span class="cy">                  .o+`</span>                   <span class="dim">-----------</span>
<span class="cy">                 `ooo/</span>                   <b class="cy">OS</b><span class="fg">: Arch Linux x86_64</span>
<span class="cy">                `+oooo:</span>                  <b class="cy">Kernel</b><span class="fg">: 6.16.3-arch1-1</span>
<span class="cy">               `+oooooo:</span>                 <b class="cy">Uptime</b><span class="fg">: 12 days, 6 hours, 26 mins</span>
<span class="cy">               -+oooooo+:</span>                <b class="cy">Packages</b><span class="fg">: 417 (pacman)</span>
<span class="cy">             `/:-:++oooo+:</span>               <b class="cy">Shell</b><span class="fg">: bash 5.3.3</span>
<span class="cy">            `/++++/+++++++:</span>              <b class="cy">Terminal</b><span class="fg">: /dev/pts/0</span>
<span class="cy">           `/++++++++++++++:</span>             <b class="cy">CPU</b><span class="fg">: Intel i5-5250U (4) @ 2.700GHz</span>
<span class="cy">          `/+++ooooooooooooo/`</span>           <b class="cy">GPU</b><span class="fg">: Intel HD Graphics 6000</span>
<span class="cy">         ./ooosssso++osssssso+`</span>          <b class="cy">Memory</b><span class="fg">: 4485MiB / 7621MiB</span>
<span class="cy">        .oossssso-````/ossssss+`</span>
<span class="cy">       -osssssso.      :ssssssso.</span>
<span class="cy">      :osssssss/        osssso+++.</span>
<span class="cy">     /ossssssss/        +ssssooo/-</span>
<span class="cy">   `/ossssso+/:-        -:/+osssso+-</span>
<span class="cy">  `+sso+:-`                 `.-/+oso:</span>
<span class="cy"> `++:.                           `-/+/</span>
<span class="cy"> .`                                 `/</span>

<span class="fg">[toff@bender ~]$ </span></pre><div class="cb" style="left:172.90px;top:103.20px;background:#000000"></div><div class="cb" style="left:185.50px;top:103.20px;background:#cc0000"></div><div class="cb" style="left:198.10px;top:103.20px;background:#1ec81e"></div><div class="cb" style="left:210.70px;top:103.20px;background:#c8c000"></div><div class="cb" style="left:223.30px;top:103.20px;background:#0000c8"></div><div class="cb" style="left:235.90px;top:103.20px;background:#c000c8"></div><div class="cb" style="left:248.50px;top:103.20px;background:#00c0c0"></div><div class="cb" style="left:261.10px;top:103.20px;background:#c8c8c8"></div><div class="cb" style="left:172.90px;top:111.20px;background:#3c3c3c"></div><div class="cb" style="left:185.50px;top:111.20px;background:#ff3c3c"></div><div class="cb" style="left:198.10px;top:111.20px;background:#3cff3c"></div><div class="cb" style="left:210.70px;top:111.20px;background:#ffff3c"></div><div class="cb" style="left:223.30px;top:111.20px;background:#3c3cff"></div><div class="cb" style="left:235.90px;top:111.20px;background:#ff3cff"></div><div class="cb" style="left:248.50px;top:111.20px;background:#3cffff"></div><div class="cb" style="left:261.10px;top:111.20px;background:#ffffff"></div><div class="cur"></div></div><div class="edge"></div></div></body></html>
